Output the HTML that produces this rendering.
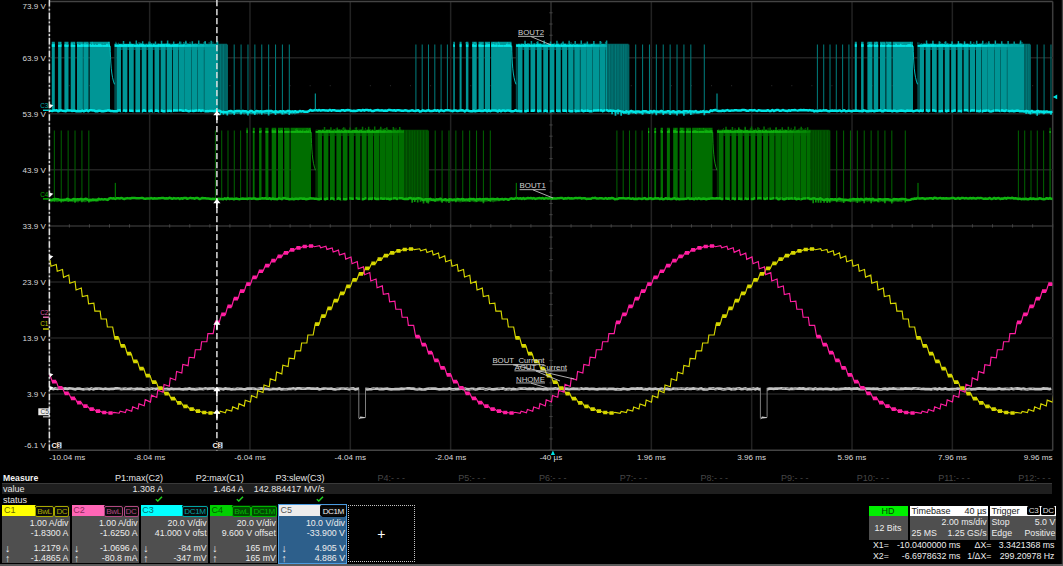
<!DOCTYPE html>
<html><head><meta charset="utf-8"><title>Oscilloscope</title>
<style>
html,body{margin:0;padding:0;background:#000;}
body{width:1063px;height:566px;position:relative;overflow:hidden;font-family:"Liberation Sans", sans-serif;font-size:9px;color:#e6e6e6;}
.m{position:absolute;white-space:nowrap;line-height:10px;}
.r{text-align:right;}
.dim{color:#474747;}
.ch{position:absolute;top:505.3px;width:67.4px;height:57.4px;}
.ch .hd{position:absolute;left:0;top:0;width:67.4px;height:10.8px;line-height:11px;}
.ch .nm{position:absolute;left:1.6px;top:0;font-size:9px;}
.ch .bgs{position:absolute;right:0;top:0;height:10.8px;display:flex;gap:0.6px;background:#0a0a0a;padding:0 0.4px;box-sizing:border-box;border-radius:1.5px 0 0 1.5px;}
.ch .bg{display:block;height:8.8px;margin-top:0.5px;line-height:9px;font-size:8.1px;padding:0 1.1px;border:0.65px solid currentColor;border-radius:2px;letter-spacing:-0.42px;}
.ch .ln{position:absolute;left:0;width:66px;text-align:right;line-height:10px;font-size:8.8px;color:#ededed;white-space:nowrap;}
.ch .ln i{position:absolute;left:2.5px;font-style:normal;font-size:10.5px;}
.box{position:absolute;background:#4f4f4f;}
.wh{position:absolute;background:#fff;color:#222;height:10.2px;line-height:10.4px;font-size:9px;}
.t{position:absolute;white-space:nowrap;line-height:10px;font-size:8.8px;color:#ededed;}
.bb{display:inline-block;background:#000;color:#fff;border-radius:1.5px;font-size:8px;line-height:9.6px;height:8.8px;padding:0 1.6px;vertical-align:top;margin-top:0.8px;color:#ddd;margin-left:1.2px;letter-spacing:-0.3px;}
</style></head><body>
<svg width="1063" height="566" viewBox="0 0 1063 566" style="position:absolute;left:0;top:0">
<rect width="1063" height="566" fill="#000"/>
<g stroke-width="1.5">
<line x1="49.3" y1="1.6" x2="49.3" y2="450.2" stroke="#3c3c3c"/>
<line x1="149.64" y1="1.6" x2="149.64" y2="450.2" stroke="#222"/>
<line x1="249.98" y1="1.6" x2="249.98" y2="450.2" stroke="#222"/>
<line x1="350.32" y1="1.6" x2="350.32" y2="450.2" stroke="#222"/>
<line x1="450.66" y1="1.6" x2="450.66" y2="450.2" stroke="#222"/>
<line x1="551" y1="1.6" x2="551" y2="450.2" stroke="#303030"/>
<line x1="651.34" y1="1.6" x2="651.34" y2="450.2" stroke="#222"/>
<line x1="751.68" y1="1.6" x2="751.68" y2="450.2" stroke="#222"/>
<line x1="852.02" y1="1.6" x2="852.02" y2="450.2" stroke="#222"/>
<line x1="952.36" y1="1.6" x2="952.36" y2="450.2" stroke="#222"/>
<line x1="1052.7" y1="1.6" x2="1052.7" y2="450.2" stroke="#3c3c3c"/>
<line x1="49.3" y1="1.6" x2="1052.7" y2="1.6" stroke="#444"/>
<line x1="49.3" y1="57.67" x2="1052.7" y2="57.67" stroke="#222"/>
<line x1="49.3" y1="113.75" x2="1052.7" y2="113.75" stroke="#222"/>
<line x1="49.3" y1="169.82" x2="1052.7" y2="169.82" stroke="#222"/>
<line x1="49.3" y1="225.9" x2="1052.7" y2="225.9" stroke="#303030"/>
<line x1="49.3" y1="281.98" x2="1052.7" y2="281.98" stroke="#222"/>
<line x1="49.3" y1="338.05" x2="1052.7" y2="338.05" stroke="#222"/>
<line x1="49.3" y1="394.12" x2="1052.7" y2="394.12" stroke="#222"/>
<line x1="49.3" y1="450.2" x2="1052.7" y2="450.2" stroke="#444"/>
</g>
<path d="M49.3 224.3V227.5M69.37 224.3V227.5M89.44 224.3V227.5M109.5 224.3V227.5M129.57 224.3V227.5M149.64 224.3V227.5M169.71 224.3V227.5M189.78 224.3V227.5M209.84 224.3V227.5M229.91 224.3V227.5M249.98 224.3V227.5M270.05 224.3V227.5M290.12 224.3V227.5M310.18 224.3V227.5M330.25 224.3V227.5M350.32 224.3V227.5M370.39 224.3V227.5M390.46 224.3V227.5M410.52 224.3V227.5M430.59 224.3V227.5M450.66 224.3V227.5M470.73 224.3V227.5M490.8 224.3V227.5M510.86 224.3V227.5M530.93 224.3V227.5M551 224.3V227.5M571.07 224.3V227.5M591.14 224.3V227.5M611.2 224.3V227.5M631.27 224.3V227.5M651.34 224.3V227.5M671.41 224.3V227.5M691.48 224.3V227.5M711.54 224.3V227.5M731.61 224.3V227.5M751.68 224.3V227.5M771.75 224.3V227.5M791.82 224.3V227.5M811.88 224.3V227.5M831.95 224.3V227.5M852.02 224.3V227.5M872.09 224.3V227.5M892.16 224.3V227.5M912.22 224.3V227.5M932.29 224.3V227.5M952.36 224.3V227.5M972.43 224.3V227.5M992.5 224.3V227.5M1012.56 224.3V227.5M1032.63 224.3V227.5M1052.7 224.3V227.5M549.4 1.6H552.6M549.4 12.81H552.6M549.4 24.03H552.6M549.4 35.24H552.6M549.4 46.46H552.6M549.4 57.68H552.6M549.4 68.89H552.6M549.4 80.1H552.6M549.4 91.32H552.6M549.4 102.53H552.6M549.4 113.75H552.6M549.4 124.96H552.6M549.4 136.18H552.6M549.4 147.39H552.6M549.4 158.61H552.6M549.4 169.82H552.6M549.4 181.04H552.6M549.4 192.25H552.6M549.4 203.47H552.6M549.4 214.68H552.6M549.4 225.9H552.6M549.4 237.11H552.6M549.4 248.33H552.6M549.4 259.55H552.6M549.4 270.76H552.6M549.4 281.98H552.6M549.4 293.19H552.6M549.4 304.4H552.6M549.4 315.62H552.6M549.4 326.84H552.6M549.4 338.05H552.6M549.4 349.26H552.6M549.4 360.48H552.6M549.4 371.69H552.6M549.4 382.91H552.6M549.4 394.12H552.6M549.4 405.34H552.6M549.4 416.55H552.6M549.4 427.77H552.6M549.4 438.98H552.6M549.4 450.2H552.6" stroke="#444" stroke-width="1" fill="none"/>
<path d="M68.87 85.71h1M88.94 85.71h1M109 85.71h1M129.07 85.71h1M169.21 85.71h1M189.28 85.71h1M209.34 85.71h1M229.41 85.71h1M269.55 85.71h1M289.62 85.71h1M309.68 85.71h1M329.75 85.71h1M369.89 85.71h1M389.96 85.71h1M410.02 85.71h1M430.09 85.71h1M470.23 85.71h1M490.3 85.71h1M510.36 85.71h1M530.43 85.71h1M570.57 85.71h1M590.64 85.71h1M610.7 85.71h1M630.77 85.71h1M670.91 85.71h1M690.98 85.71h1M711.04 85.71h1M731.11 85.71h1M771.25 85.71h1M791.32 85.71h1M811.38 85.71h1M831.45 85.71h1M871.59 85.71h1M891.66 85.71h1M911.72 85.71h1M931.79 85.71h1M971.93 85.71h1M992 85.71h1M1012.06 85.71h1M1032.13 85.71h1" stroke="#2c2c2c" stroke-width="1" fill="none"/>
<clipPath id="cp"><rect x="49" y="0" width="1003.5" height="451"/></clipPath>
<g clip-path="url(#cp)">
<polyline points="49.3 388.72 51.3 388.55 53.3 389.05 55.3 388.47 57.3 388.94 59.3 388.77 61.3 388.46 63.3 388.91 65.3 388.44 67.3 388.83 69.3 388.47 71.3 388.49 73.3 388.82 75.3 389.23 77.3 388.52 79.3 388.62 81.3 389.03 83.3 389.35 85.3 388.98 87.3 388.8 89.3 389.38 91.3 388.45 93.3 389.26 95.3 388.69 97.3 388.54 99.3 388.52 101.3 388.71 103.3 389.22 105.3 388.58 107.3 388.98 109.3 389.04 111.3 388.77 113.3 388.95 115.3 388.46 117.3 388.46 119.3 388.61 121.3 389.08 123.3 388.83 125.3 388.71 127.3 388.99 129.3 388.85 131.3 388.7 133.3 389.19 135.3 389.1 137.3 388.64 139.3 388.97 141.3 388.93 143.3 389.28 145.3 389.13 147.3 388.69 149.3 389.38 151.3 388.52 153.3 388.82 155.3 389.16 157.3 388.55 159.3 388.89 161.3 388.44 163.3 389.07 165.3 389.16 167.3 388.97 169.3 389.28 171.3 388.71 173.3 389.1 175.3 388.99 177.3 388.98 179.3 388.86 181.3 389.24 183.3 389.34 185.3 388.87 187.3 389.06 189.3 388.46 191.3 389.1 193.3 389.05 195.3 389.39 197.3 389.22 199.3 388.68 201.3 388.79 203.3 389.07 205.3 388.42 207.3 388.86 209.3 388.57 211.3 388.52 213.3 388.46 215.3 389.17 217.3 388.53 219.3 388.65 221.3 388.79 223.3 389.27 225.3 388.48 227.3 388.85 229.3 388.95 231.3 389.28 233.3 389.22 235.3 389.26 237.3 388.68 239.3 388.82 241.3 388.76 243.3 389.28 245.3 389.36 247.3 388.55 249.3 388.58 251.3 388.63 253.3 388.63 255.3 388.88 257.3 388.99 259.3 388.66 261.3 388.4 263.3 388.82 265.3 388.77 267.3 388.97 269.3 389.35 271.3 389.09 273.3 388.92 275.3 389.02 277.3 389.08 279.3 388.45 281.3 389.3 283.3 389.18 285.3 389.27 287.3 389.2 289.3 388.79 291.3 388.8 293.3 388.5 295.3 389.03 297.3 388.46 299.3 388.47 301.3 388.61 303.3 388.56 305.3 388.74 307.3 388.45 309.3 388.4 311.3 388.55 313.3 388.5 315.3 388.76 317.3 388.43 319.3 389.27 321.3 389.01 323.3 388.55 325.3 388.65 327.3 388.75 329.3 388.76 331.3 388.52 333.3 389.25 335.3 389.39 337.3 388.87 339.3 388.88 341.3 388.49 343.3 388.5 345.3 388.74 347.3 388.66 349.3 389.23 351.3 388.56 353.3 388.42 355.3 389.35 357.3 388.93 359.3 388.55 361.3 388.94 363.3 388.43 365.3 388.93 367.3 389.38 369.3 389.26 371.3 389.1 373.3 388.66 375.3 388.77 377.3 388.57 379.3 389.17 381.3 388.93 383.3 389.18 385.3 388.73 387.3 388.62 389.3 389.21 391.3 389.38 393.3 389.25 395.3 389.21 397.3 389.22 399.3 389.14 401.3 388.63 403.3 388.92 405.3 388.76 407.3 388.43 409.3 388.43 411.3 388.68 413.3 388.66 415.3 389.09 417.3 389.36 419.3 388.85 421.3 389.34 423.3 389.39 425.3 389.36 427.3 388.76 429.3 388.62 431.3 388.63 433.3 388.6 435.3 388.6 437.3 389.02 439.3 389.3 441.3 389.24 443.3 388.88 445.3 389.05 447.3 389.2 449.3 388.48 451.3 389.06 453.3 389.31 455.3 389.18 457.3 389.15 459.3 388.88 461.3 388.58 463.3 389.19 465.3 388.73 467.3 389.2 469.3 389.37 471.3 388.8 473.3 388.8 475.3 389.35 477.3 389.12 479.3 388.57 481.3 388.53 483.3 388.55 485.3 389.3 487.3 389.21 489.3 388.55 491.3 389.23 493.3 389.38 495.3 389.06 497.3 388.75 499.3 388.95 501.3 388.53 503.3 388.41 505.3 389.37 507.3 389.05 509.3 388.93 511.3 389.33 513.3 388.83 515.3 389.27 517.3 389.23 519.3 388.61 521.3 388.65 523.3 388.69 525.3 388.64 527.3 388.99 529.3 388.66 531.3 388.82 533.3 388.53 535.3 389.31 537.3 388.75 539.3 388.86 541.3 388.98 543.3 389.3 545.3 388.82 547.3 389.32 549.3 388.9 551.3 388.93 553.3 388.92 555.3 388.42 557.3 388.84 559.3 388.58 561.3 388.4 563.3 389.2 565.3 388.57 567.3 388.87 569.3 389.13 571.3 388.96 573.3 388.73 575.3 388.92 577.3 388.96 579.3 389.18 581.3 388.51 583.3 388.96 585.3 388.65 587.3 388.68 589.3 389.17 591.3 388.91 593.3 388.96 595.3 389.16 597.3 389.31 599.3 388.84 601.3 389.01 603.3 388.91 605.3 388.91 607.3 389.09 609.3 388.85 611.3 388.93 613.3 388.88 615.3 389.34 617.3 389.1 619.3 389.28 621.3 389.34 623.3 388.66 625.3 388.96 627.3 389.34 629.3 389.24 631.3 388.54 633.3 388.52 635.3 388.84 637.3 388.47 639.3 388.64 641.3 388.47 643.3 389.07 645.3 389.18 647.3 389.3 649.3 388.55 651.3 389.12 653.3 389.06 655.3 388.54 657.3 389.28 659.3 389.37 661.3 388.62 663.3 389.35 665.3 388.8 667.3 388.89 669.3 389.39 671.3 389.23 673.3 388.56 675.3 388.83 677.3 388.92 679.3 388.74 681.3 388.6 683.3 388.72 685.3 389.12 687.3 388.42 689.3 388.95 691.3 388.84 693.3 388.42 695.3 388.73 697.3 389.02 699.3 388.91 701.3 388.46 703.3 389.39 705.3 389.19 707.3 389.37 709.3 388.5 711.3 388.67 713.3 388.44 715.3 389.18 717.3 388.67 719.3 388.53 721.3 388.82 723.3 389.31 725.3 389.22 727.3 388.66 729.3 388.55 731.3 389.32 733.3 388.97 735.3 389.1 737.3 388.49 739.3 388.46 741.3 389.09 743.3 388.83 745.3 388.47 747.3 389.34 749.3 389.03 751.3 389.2 753.3 388.48 755.3 389.26 757.3 388.47 759.3 389.26 761.3 388.85 763.3 388.74 765.3 388.95 767.3 389.33 769.3 388.67 771.3 388.53 773.3 388.93 775.3 388.64 777.3 388.51 779.3 388.56 781.3 388.45 783.3 388.6 785.3 388.71 787.3 388.71 789.3 389.16 791.3 388.69 793.3 388.9 795.3 388.58 797.3 388.75 799.3 388.42 801.3 388.65 803.3 388.42 805.3 389.13 807.3 388.95 809.3 388.59 811.3 388.87 813.3 389.33 815.3 388.51 817.3 389.22 819.3 388.83 821.3 388.9 823.3 389.23 825.3 388.79 827.3 388.91 829.3 389.09 831.3 389.38 833.3 388.74 835.3 389.23 837.3 389.11 839.3 389.04 841.3 388.8 843.3 388.75 845.3 388.45 847.3 388.53 849.3 388.47 851.3 389.14 853.3 388.66 855.3 388.56 857.3 388.48 859.3 389.24 861.3 389.27 863.3 389.07 865.3 388.68 867.3 388.64 869.3 388.69 871.3 388.86 873.3 388.56 875.3 388.85 877.3 388.66 879.3 389.36 881.3 389.37 883.3 388.95 885.3 388.64 887.3 389.37 889.3 388.71 891.3 388.76 893.3 388.4 895.3 388.78 897.3 388.87 899.3 388.9 901.3 388.6 903.3 388.9 905.3 388.4 907.3 388.66 909.3 388.49 911.3 388.8 913.3 388.44 915.3 388.42 917.3 388.7 919.3 388.63 921.3 388.99 923.3 388.93 925.3 389.15 927.3 389.06 929.3 389.12 931.3 389.28 933.3 388.79 935.3 388.73 937.3 389.38 939.3 388.55 941.3 389.12 943.3 389.04 945.3 388.44 947.3 389.24 949.3 389.29 951.3 389.03 953.3 389.13 955.3 389.21 957.3 388.54 959.3 388.92 961.3 388.9 963.3 389.23 965.3 389.2 967.3 389.23 969.3 388.98 971.3 389.29 973.3 389.08 975.3 389.09 977.3 388.63 979.3 388.43 981.3 388.53 983.3 388.76 985.3 388.5 987.3 389.24 989.3 388.96 991.3 389.03 993.3 389.03 995.3 389.08 997.3 388.89 999.3 388.4 1001.3 389.2 1003.3 389.15 1005.3 388.9 1007.3 388.94 1009.3 389.06 1011.3 388.47 1013.3 389.14 1015.3 388.65 1017.3 388.47 1019.3 388.67 1021.3 389.13 1023.3 388.61 1025.3 389.14 1027.3 389.38 1029.3 388.89 1031.3 388.78 1033.3 388.88 1035.3 389.08 1037.3 389.17 1039.3 389.02 1041.3 389.04 1043.3 388.48 1045.3 388.55 1047.3 388.65 1049.3 389.14 1051.3 388.7" stroke="#c2c2c2" stroke-width="2.7" fill="none"/>
<path d="M55.35 388.48h3.18M84.16 388.83h3.55M91.03 388.48h2.02M97.81 389.05h1.85M117.29 389.62h2.72M120.39 388.89h2.63M124.59 388.62h2.29M130.95 389.35h3.6M144.45 388.71h4M149.8 388.77h2.19M153 389.5h2.21M159.74 388.48h2.78M163.5 389.72h3.71M195.18 388.09h3.82M203.06 389.33h3.94M215.88 388.29h2.02M233.37 388.25h1.98M236.73 388.16h2.1M251.97 388.94h2.44M256.32 388.5h3.92M269.21 388.45h2.5M283.47 389.28h3.74M291.36 389.67h3.56M301.78 388.28h2.81M324.66 389.41h2.08M335.56 388.45h3.09M341.35 388.13h2.81M346.68 388.4h3M349.72 388.83h3.9M360.2 388.44h3.9M366.02 388.04h2.75M371.72 388.46h3.17M378.42 388.06h2.35M404.84 389.37h2.24M415.4 388.75h3.16M422.19 388.71h2.03M429.09 388.09h1.65M451.51 389.68h3.37M459.15 388.6h1.92M462.16 388.63h3.89M469.48 389.48h3.56M474.21 388.85h2.43M480.89 388.66h3.74M484.01 389.46h3.42M487.18 388.11h3.8M497.8 388.49h3.89M503.27 389.29h2.29M507.37 389.36h3.79M516 388.86h3.89M522.82 388.45h2.57M547.88 388.65h3.46M551.19 389.36h2.12M554.45 388.99h2.31M568.33 388.15h1.74M578.11 388.75h3.05M606.14 388.44h1.88M616.98 389.79h2.77M642.86 388.53h1.8M661.24 389.4h3.86M670.14 388.66h1.85M673.96 389.08h3.13M677.77 388.59h3.2M681.51 388.37h3.49M686.71 388.18h2.49M695.27 389.25h2.52M699.4 389.72h2.28M704.67 388.75h3.66M711.66 388.35h3.32M715.47 389.62h2.56M721.75 389.59h2.65M725.4 388.99h3.1M732.04 389.12h2.43M737.06 388.51h2.8M743.76 388.88h3.51M750.63 388.23h3.86M778.31 389.52h3.57M782.04 388.72h2.79M786.57 388.44h3.31M793.16 389.01h3.39M809.21 389.05h2.56M814.85 388.79h1.56M837.53 388.78h1.73M879.42 389.77h2.73M896.63 388.63h3.39M914.62 388.47h2.77M918.89 388.33h1.9M932.22 389.41h1.79M953.53 389.79h3.07M967.48 389.38h2.61M990.98 388h1.58M1005.89 388.41h3.13M1008.98 388.64h1.77M1013.41 389.05h2.97M1022.13 389.69h2.11M1025.72 389.15h3.68M1031.85 388.48h1.53M1052.54 389.63h1.61" stroke="#7a7a7a" stroke-width="0.9" fill="none"/>
<rect x="359.1" y="385.9" width="6.2" height="6" fill="#000"/>
<path d="M358.8 388.9V418.4M365.5 416.9V387.9" stroke="#8c8c8c" stroke-width="0.9" fill="none"/>
<path d="M358.6 419.4L360.3 416.5L365.6 417.29999999999995L365.6 418.09999999999997L360.4 418.5Z" fill="#cfcfcf"/>
<rect x="760.7" y="385.9" width="6.2" height="6" fill="#000"/>
<path d="M760.4 388.9V418.4M767.1 416.9V387.9" stroke="#8c8c8c" stroke-width="0.9" fill="none"/>
<path d="M760.2 419.4L761.9 416.5L767.2 417.29999999999995L767.2 418.09999999999997L762 418.5Z" fill="#cfcfcf"/>
<path d="M246.5 127.8H247.7V198.4H246.5ZM252.8 127.8H254.6V198.4H252.8ZM259.1 127.8H261.5V198.4H259.1ZM265.4 127.8H268.4V198.4H265.4ZM271.7 127.8H276.2V198.4H271.7ZM278 127.8H283V198.4H278ZM284.3 127.8H289.6V198.4H284.3ZM290.6 127.8H296.95V198.4H290.6ZM296.9 127.8H303.25V198.4H296.9ZM303.2 127.8H309.55V198.4H303.2ZM309.5 127.8H311V198.4H309.5ZM648 127.8H649.2V198.4H648ZM654.3 127.8H656.1V198.4H654.3ZM660.6 127.8H663V198.4H660.6ZM666.9 127.8H669.9V198.4H666.9ZM673.2 127.8H677.7V198.4H673.2ZM679.5 127.8H684.5V198.4H679.5ZM685.8 127.8H691.1V198.4H685.8ZM692.1 127.8H698.45V198.4H692.1ZM698.4 127.8H704.75V198.4H698.4ZM704.7 127.8H711.05V198.4H704.7ZM711 127.8H712.5V198.4H711ZM1049.5 127.8H1050.7V198.4H1049.5Z" fill="#006e00"/>
<path d="M317.4 129.8H404V198.4H317.4ZM718.9 129.8H810.8V198.4H718.9Z" fill="#006e00"/>
<path d="M324.53 130.8V127.06M330.91 130.8V127.33M337.29 130.8V127.47M343.67 130.8V127.32M350.05 130.8V127.55M356.43 130.8V127.2M362.55 130.8V126.7M368.63 130.8V126.77M374.7 130.8V126.59M380.77 130.8V126.75M386.84 130.8V127.28M393.36 130.8V126.94M399.74 130.8V127.08M726.03 130.8V126.65M732.41 130.8V126.97M738.79 130.8V127.28M745.17 130.8V126.83M751.55 130.8V126.44M757.93 130.8V127.34M764.05 130.8V126.54M770.13 130.8V127.58M776.2 130.8V127.29M782.27 130.8V127.32M788.34 130.8V126.71M794.86 130.8V126.47M801.24 130.8V126.7M807.62 130.8V127.21" stroke="#006e00" stroke-width="1.5" fill="none"/>
<path d="M404 129.8H428V198.4H404ZM810.8 129.8H829.5V198.4H810.8Z" fill="#004a00"/>
<path d="M315.3 129.8H317.4V198.4H315.3ZM716.8 129.8H718.9V198.4H716.8Z" fill="#003400"/>
<path d="M54.36 130.6V198.4M61.25 130.6V198.4M68.14 130.6V198.4M75.03 130.6V198.4M81.92 130.6V198.4M88.81 130.6V198.4M215.4 130.6V198.4M221.7 130.6V198.4M228 130.6V198.4M234.3 130.6V198.4M240.6 130.6V198.4M406.4 130.6V198.4M409.74 130.6V198.4M412.19 130.6V198.4M414.71 130.6V198.4M417.68 130.6V198.4M420.54 130.6V198.4M423.54 130.6V198.4M426.74 130.6V198.4M428.3 130.6V198.4M435.19 130.6V198.4M442.08 130.6V198.4M448.97 130.6V198.4M455.86 130.6V198.4M462.75 130.6V198.4M469.64 130.6V198.4M476.53 130.6V198.4M483.42 130.6V198.4M490.31 130.6V198.4M616.9 130.6V198.4M623.2 130.6V198.4M629.5 130.6V198.4M635.8 130.6V198.4M642.1 130.6V198.4M813.2 130.6V198.4M815.84 130.6V198.4M818.47 130.6V198.4M820.82 130.6V198.4M824.1 130.6V198.4M827.26 130.6V198.4M829.8 130.6V198.4M836.69 130.6V198.4M843.58 130.6V198.4M850.47 130.6V198.4M857.36 130.6V198.4M864.25 130.6V198.4M871.14 130.6V198.4M878.03 130.6V198.4M884.92 130.6V198.4M891.81 130.6V198.4M905.3 130.6V198.4M1018.4 130.6V198.4M1024.7 130.6V198.4M1031 130.6V198.4M1037.3 130.6V198.4M1043.6 130.6V198.4" stroke="#006000" stroke-width="1.05" fill="none"/>
<path d="M246.5 131.9H247.7" stroke="#10b410" stroke-width="2" stroke-opacity="1" fill="none"/>
<path d="M246.5 130.29h1.2" stroke="#10b410" stroke-width="1.3" stroke-opacity="0.8" fill="none"/>
<path d="M252.8 131.9H254.6" stroke="#10b410" stroke-width="2" stroke-opacity="1" fill="none"/>
<path d="" stroke="#10b410" stroke-width="1.3" stroke-opacity="0.8" fill="none"/>
<path d="M259.1 131.9H261.5" stroke="#10b410" stroke-width="2" stroke-opacity="1" fill="none"/>
<path d="M260.87 130.77h0.63" stroke="#10b410" stroke-width="1.3" stroke-opacity="0.8" fill="none"/>
<path d="M265.4 131.9H268.4" stroke="#10b410" stroke-width="2" stroke-opacity="1" fill="none"/>
<path d="" stroke="#10b410" stroke-width="1.3" stroke-opacity="0.8" fill="none"/>
<path d="M271.7 131.9H276.2" stroke="#10b410" stroke-width="2" stroke-opacity="1" fill="none"/>
<path d="M271.7 130.27h1.6M273.3 130.83h1.67M274.97 130.19h1M275.97 130.21h0.23" stroke="#10b410" stroke-width="1.3" stroke-opacity="0.8" fill="none"/>
<path d="M278 131.9H283" stroke="#10b410" stroke-width="2" stroke-opacity="1" fill="none"/>
<path d="M278 130.65h0.84M280.53 130.57h1.83" stroke="#10b410" stroke-width="1.3" stroke-opacity="0.8" fill="none"/>
<path d="M284.3 131.9H289.6" stroke="#10b410" stroke-width="2" stroke-opacity="1" fill="none"/>
<path d="M289.22 130.19h0.38" stroke="#10b410" stroke-width="1.3" stroke-opacity="0.8" fill="none"/>
<path d="M290.6 131.9H296.95" stroke="#10b410" stroke-width="2" stroke-opacity="1" fill="none"/>
<path d="M295.34 130.18h1.2M296.54 130.36h0.41" stroke="#10b410" stroke-width="1.3" stroke-opacity="0.8" fill="none"/>
<path d="M296.9 131.9H303.25" stroke="#10b410" stroke-width="2" stroke-opacity="1" fill="none"/>
<path d="M296.9 130.31h1.39M299.49 130.87h1.32M302.31 130.43h0.94" stroke="#10b410" stroke-width="1.3" stroke-opacity="0.8" fill="none"/>
<path d="M303.2 131.9H309.55" stroke="#10b410" stroke-width="2" stroke-opacity="1" fill="none"/>
<path d="M305.9 130.79h1.55M308.38 130.26h1.04" stroke="#10b410" stroke-width="1.3" stroke-opacity="0.8" fill="none"/>
<path d="M309.5 131.9H311" stroke="#10b410" stroke-width="2" stroke-opacity="1" fill="none"/>
<path d="M309.5 130.49h0.81M310.31 130.5h0.69" stroke="#10b410" stroke-width="1.3" stroke-opacity="0.8" fill="none"/>
<path d="M315.6 131.9H322.01" stroke="#10b410" stroke-width="2" stroke-opacity="1" fill="none"/>
<path d="M318.05 130.66h1.2M319.25 130.61h1.5" stroke="#10b410" stroke-width="1.3" stroke-opacity="0.8" fill="none"/>
<path d="M321.98 131.9H328.39" stroke="#10b410" stroke-width="2" stroke-opacity="1" fill="none"/>
<path d="M321.98 130.42h1.68M325.93 130.31h0.84M326.77 130.4h1.62" stroke="#10b410" stroke-width="1.3" stroke-opacity="0.8" fill="none"/>
<path d="M328.36 131.9H334.77" stroke="#10b410" stroke-width="2" stroke-opacity="1" fill="none"/>
<path d="M328.36 130.47h2.04M333.8 130.22h0.97" stroke="#10b410" stroke-width="1.3" stroke-opacity="0.8" fill="none"/>
<path d="M334.74 131.9H341.15" stroke="#10b410" stroke-width="2" stroke-opacity="1" fill="none"/>
<path d="M336.72 130.45h1.84M338.56 130.2h1.88" stroke="#10b410" stroke-width="1.3" stroke-opacity="0.8" fill="none"/>
<path d="M341.12 131.9H347.53" stroke="#10b410" stroke-width="2" stroke-opacity="1" fill="none"/>
<path d="M341.12 130.34h1.13M344.04 130.3h1.02M345.05 130.23h1.26M346.31 130.88h1.22" stroke="#10b410" stroke-width="1.3" stroke-opacity="0.8" fill="none"/>
<path d="M347.5 131.9H353.91" stroke="#10b410" stroke-width="2" stroke-opacity="1" fill="none"/>
<path d="M347.5 130.87h1.82M349.32 130.89h0.94M352.18 130.61h1.41M353.58 130.41h0.33" stroke="#10b410" stroke-width="1.3" stroke-opacity="0.8" fill="none"/>
<path d="M353.88 131.9H360.29" stroke="#10b410" stroke-width="2" stroke-opacity="1" fill="none"/>
<path d="M353.88 130.73h0.85M354.73 130.61h1.77M356.5 130.58h1.45M359.31 130.56h0.98" stroke="#10b410" stroke-width="1.3" stroke-opacity="0.8" fill="none"/>
<path d="M360.26 131.9H366.67" stroke="#10b410" stroke-width="2" stroke-opacity="1" fill="none"/>
<path d="M360.26 130.28h1.85" stroke="#10b410" stroke-width="1.3" stroke-opacity="0.8" fill="none"/>
<path d="M366.64 131.9H373.05" stroke="#10b410" stroke-width="2" stroke-opacity="1" fill="none"/>
<path d="M366.64 130.35h1.7M368.34 130.44h1.68M371.91 130.44h1.14" stroke="#10b410" stroke-width="1.3" stroke-opacity="0.8" fill="none"/>
<path d="M373.02 131.9H379.43" stroke="#10b410" stroke-width="2" stroke-opacity="0.96" fill="none"/>
<path d="M375.83 130.62h2.1M377.93 130.49h1.5" stroke="#10b410" stroke-width="1.3" stroke-opacity="0.76" fill="none"/>
<path d="M379.4 131.9H385.81" stroke="#10b410" stroke-width="2" stroke-opacity="0.81" fill="none"/>
<path d="M379.4 130.53h2.16M382.59 130.18h2.12M384.71 130.67h1.1" stroke="#10b410" stroke-width="1.3" stroke-opacity="0.65" fill="none"/>
<path d="M385.78 131.9H392.19" stroke="#10b410" stroke-width="2" stroke-opacity="0.67" fill="none"/>
<path d="M387.3 130.43h1.96M389.26 130.65h2.13" stroke="#10b410" stroke-width="1.3" stroke-opacity="0.54" fill="none"/>
<path d="M392.16 131.9H398.57" stroke="#10b410" stroke-width="2" stroke-opacity="0.53" fill="none"/>
<path d="M393.13 130.32h1.3M394.43 130.43h1.36M397.18 130.28h1.29" stroke="#10b410" stroke-width="1.3" stroke-opacity="0.42" fill="none"/>
<path d="M398.54 131.9H404" stroke="#10b410" stroke-width="2" stroke-opacity="0.39" fill="none"/>
<path d="M398.54 130.74h1.54M400.08 130.2h1.35M403.31 130.55h0.69" stroke="#10b410" stroke-width="1.3" stroke-opacity="0.31" fill="none"/>
<path d="M648 131.9H649.2" stroke="#10b410" stroke-width="2" stroke-opacity="1" fill="none"/>
<path d="" stroke="#10b410" stroke-width="1.3" stroke-opacity="0.8" fill="none"/>
<path d="M654.3 131.9H656.1" stroke="#10b410" stroke-width="2" stroke-opacity="1" fill="none"/>
<path d="" stroke="#10b410" stroke-width="1.3" stroke-opacity="0.8" fill="none"/>
<path d="M660.6 131.9H663" stroke="#10b410" stroke-width="2" stroke-opacity="1" fill="none"/>
<path d="M660.6 130.54h1.46" stroke="#10b410" stroke-width="1.3" stroke-opacity="0.8" fill="none"/>
<path d="M666.9 131.9H669.9" stroke="#10b410" stroke-width="2" stroke-opacity="1" fill="none"/>
<path d="M668.2 130.3h1.17M669.37 130.1h0.53" stroke="#10b410" stroke-width="1.3" stroke-opacity="0.8" fill="none"/>
<path d="M673.2 131.9H677.7" stroke="#10b410" stroke-width="2" stroke-opacity="1" fill="none"/>
<path d="M673.2 130.3h1.81M675.01 130.44h1.22" stroke="#10b410" stroke-width="1.3" stroke-opacity="0.8" fill="none"/>
<path d="M679.5 131.9H684.5" stroke="#10b410" stroke-width="2" stroke-opacity="1" fill="none"/>
<path d="M680.81 130.76h2" stroke="#10b410" stroke-width="1.3" stroke-opacity="0.8" fill="none"/>
<path d="M685.8 131.9H691.1" stroke="#10b410" stroke-width="2" stroke-opacity="1" fill="none"/>
<path d="M686.8 130.11h1.69M690.62 130.21h0.48" stroke="#10b410" stroke-width="1.3" stroke-opacity="0.8" fill="none"/>
<path d="M692.1 131.9H698.45" stroke="#10b410" stroke-width="2" stroke-opacity="1" fill="none"/>
<path d="M693.23 130.82h1.29M694.51 130.81h1.91" stroke="#10b410" stroke-width="1.3" stroke-opacity="0.8" fill="none"/>
<path d="M698.4 131.9H704.75" stroke="#10b410" stroke-width="2" stroke-opacity="1" fill="none"/>
<path d="M704.34 130.29h0.41" stroke="#10b410" stroke-width="1.3" stroke-opacity="0.8" fill="none"/>
<path d="M704.7 131.9H711.05" stroke="#10b410" stroke-width="2" stroke-opacity="1" fill="none"/>
<path d="M704.7 130.15h1M705.7 130.49h1.45M707.15 130.79h1.5M709.46 130.63h1.46M710.91 130.44h0.14" stroke="#10b410" stroke-width="1.3" stroke-opacity="0.8" fill="none"/>
<path d="M711 131.9H712.5" stroke="#10b410" stroke-width="2" stroke-opacity="1" fill="none"/>
<path d="M711 130.61h1.5" stroke="#10b410" stroke-width="1.3" stroke-opacity="0.8" fill="none"/>
<path d="M717.1 131.9H723.51" stroke="#10b410" stroke-width="2" stroke-opacity="1" fill="none"/>
<path d="M717.1 130.59h1.69M721.81 130.82h1.51" stroke="#10b410" stroke-width="1.3" stroke-opacity="0.8" fill="none"/>
<path d="M723.48 131.9H729.89" stroke="#10b410" stroke-width="2" stroke-opacity="1" fill="none"/>
<path d="M723.48 130.79h1.68M725.16 130.52h1.31M726.47 130.45h1.88M728.35 130.76h1.39" stroke="#10b410" stroke-width="1.3" stroke-opacity="0.8" fill="none"/>
<path d="M729.86 131.9H736.27" stroke="#10b410" stroke-width="2" stroke-opacity="1" fill="none"/>
<path d="M729.86 130.32h1.37M734.45 130.34h1.26" stroke="#10b410" stroke-width="1.3" stroke-opacity="0.8" fill="none"/>
<path d="M736.24 131.9H742.65" stroke="#10b410" stroke-width="2" stroke-opacity="1" fill="none"/>
<path d="M736.24 130.68h1.9M738.14 130.14h2.04M740.18 130.25h1.22M741.4 130.63h1.25" stroke="#10b410" stroke-width="1.3" stroke-opacity="0.8" fill="none"/>
<path d="M742.62 131.9H749.03" stroke="#10b410" stroke-width="2" stroke-opacity="1" fill="none"/>
<path d="M744.52 130.6h1.66M746.18 130.64h1.77" stroke="#10b410" stroke-width="1.3" stroke-opacity="0.8" fill="none"/>
<path d="M749 131.9H755.41" stroke="#10b410" stroke-width="2" stroke-opacity="1" fill="none"/>
<path d="M750.44 130.13h0.94M753.27 130.76h1.72M754.99 130.31h0.42" stroke="#10b410" stroke-width="1.3" stroke-opacity="0.8" fill="none"/>
<path d="M755.38 131.9H761.79" stroke="#10b410" stroke-width="2" stroke-opacity="1" fill="none"/>
<path d="M755.38 130.35h1.22M758.01 130.55h2.11M760.11 130.75h0.86" stroke="#10b410" stroke-width="1.3" stroke-opacity="0.8" fill="none"/>
<path d="M761.76 131.9H768.17" stroke="#10b410" stroke-width="2" stroke-opacity="1" fill="none"/>
<path d="M761.76 130.41h1.43M764.81 130.43h2.17M767.93 130.11h0.24" stroke="#10b410" stroke-width="1.3" stroke-opacity="0.8" fill="none"/>
<path d="M768.14 131.9H774.55" stroke="#10b410" stroke-width="2" stroke-opacity="1" fill="none"/>
<path d="M770.84 130.68h0.98M772.96 130.72h1.06" stroke="#10b410" stroke-width="1.3" stroke-opacity="0.8" fill="none"/>
<path d="M774.52 131.9H780.93" stroke="#10b410" stroke-width="2" stroke-opacity="0.96" fill="none"/>
<path d="M774.52 130.6h1.82M776.34 130.85h1.79M779.29 130.11h1.64" stroke="#10b410" stroke-width="1.3" stroke-opacity="0.76" fill="none"/>
<path d="M780.9 131.9H787.31" stroke="#10b410" stroke-width="2" stroke-opacity="0.81" fill="none"/>
<path d="M782.61 130.68h0.91M784.55 130.39h1.48M786.04 130.64h1.27" stroke="#10b410" stroke-width="1.3" stroke-opacity="0.65" fill="none"/>
<path d="M787.28 131.9H793.69" stroke="#10b410" stroke-width="2" stroke-opacity="0.67" fill="none"/>
<path d="M789.59 130.41h1.68M793.17 130.33h0.52" stroke="#10b410" stroke-width="1.3" stroke-opacity="0.54" fill="none"/>
<path d="M793.66 131.9H800.07" stroke="#10b410" stroke-width="2" stroke-opacity="0.53" fill="none"/>
<path d="M796.33 130.88h1.26M797.59 130.35h1.96" stroke="#10b410" stroke-width="1.3" stroke-opacity="0.42" fill="none"/>
<path d="M800.04 131.9H806.45" stroke="#10b410" stroke-width="2" stroke-opacity="0.39" fill="none"/>
<path d="M803.01 130.1h1.93M804.94 130.57h1.17" stroke="#10b410" stroke-width="1.3" stroke-opacity="0.31" fill="none"/>
<path d="M806.42 131.9H810.8" stroke="#10b410" stroke-width="2" stroke-opacity="0.25" fill="none"/>
<path d="M809.22 130.78h1.58" stroke="#10b410" stroke-width="1.3" stroke-opacity="0.2" fill="none"/>
<path d="M1049.5 131.9H1050.7" stroke="#10b410" stroke-width="2" stroke-opacity="1" fill="none"/>
<path d="" stroke="#10b410" stroke-width="1.3" stroke-opacity="0.8" fill="none"/>
<path d="M254.1 129.6v-1.29M284.3 129.6v-1.69M295.8 129.6v-0.71M296.9 129.6v-1.52M303.2 129.6v-0.47M307.1 129.6v-1.41M309.5 129.6v-1.36M316.9 129.6v-0.45M333.56 129.6v-0.72M334.74 129.6v-0.53M336.04 129.6v-1.29M342.42 129.6v-1.36M345.02 129.6v-1.93M355.18 129.6v-1.95M359.08 129.6v-0.81M365.46 129.6v-1.66M370.54 129.6v-0.63M379.4 129.6v-0.92M382 129.6v-1.17M383.3 129.6v-0.78M384.6 129.6v-1.48M385.78 129.6v-1.55M387.08 129.6v-0.46M394.76 129.6v-1.12M396.06 129.6v-1.89M654.3 129.6v-0.75M655.6 129.6v-1.54M661.9 129.6v-1.79M669.5 129.6v-0.83M675.8 129.6v-1.19M680.8 129.6v-1.97M682.1 129.6v-1.83M697.3 129.6v-0.86M699.7 129.6v-1.56M703.6 129.6v-1.69M706 129.6v-0.4M709.9 129.6v-1.1M718.4 129.6v-0.69M722.3 129.6v-0.53M723.48 129.6v-1.37M735.06 129.6v-1.57M738.84 129.6v-1.7M745.22 129.6v-1.86M750.3 129.6v-1.73M752.9 129.6v-0.99M755.38 129.6v-1.23M759.28 129.6v-1.54M768.14 129.6v-1.8M775.82 129.6v-1.95M778.42 129.6v-0.56M782.2 129.6v-0.55M784.8 129.6v-0.43M791.18 129.6v-1.79M793.66 129.6v-0.6M798.86 129.6v-1.05M800.04 129.6v-1.35M802.64 129.6v-1.32M805.24 129.6v-1.72" stroke="#10b410" stroke-width="0.8" stroke-opacity="0.6" fill="none"/>
<path d="M311.2 131.8 C311.5 147.8 312.3 162.8 315.5 170.3" stroke="#10b410" stroke-opacity="0.8" stroke-width="1" fill="none"/>
<path d="M712.7 131.8 C713 147.8 713.8 162.8 717 170.3" stroke="#10b410" stroke-opacity="0.8" stroke-width="1" fill="none"/>
<polyline points="49.3 200.16 50.6 201.3 51.9 200.95 53.2 200.36 54.5 200.27 55.8 200.63 57.1 201.17 58.4 200.81 59.7 200.16 61 200.03 62.3 200.15 63.6 201.12 64.9 200.26 66.2 200.78 67.5 200.41 68.8 200.96 70.1 200.53 71.4 200.2 72.7 201.23 74 200.75 75.3 200.97 76.6 201.13 77.9 201.33 79.2 200.02 80.5 200.48 81.8 200.21 83.1 200.7 84.4 201.22 85.7 201.12 87 200.05 88.3 200.26 89.6 201.15 90.9 200.95 92.2 200.55 93.5 200.67 94.8 200.22 96.1 201.18 97.4 200.55 98.7 201.22" stroke="#10b410" stroke-opacity="0.5" stroke-width="2" fill="none"/>
<polyline points="423 200.86 424.3 200.11 425.6 200.46 426.9 200.3 428.2 201.25 429.5 200.82 430.8 200.06 432.1 200.24 433.4 200.51 434.7 200.65 436 200.81 437.3 200.54 438.6 200.5 439.9 200.01 441.2 200.81 442.5 200.47 443.8 200.03 445.1 200.64 446.4 201.38 447.7 200.06 449 200.2 450.3 200.94 451.6 200.38 452.9 200.38 454.2 200.7 455.5 200.37 456.8 200.8 458.1 200.74 459.4 201.34 460.7 201.39 462 200.05 463.3 200.78 464.6 201.08 465.9 201.22 467.2 201.08 468.5 200.89 469.8 200.89 471.1 200.51 472.4 200.39 473.7 201.11 475 201.22 476.3 201.31 477.6 200.95 478.9 200.43 480.2 201.07 481.5 201.04 482.8 200.71 484.1 200.89 485.4 200.49 486.7 200.77 488 200.57 489.3 200.08 490.6 200.47 491.9 200.45 493.2 201.38 494.5 200.67 495.8 200.51 497.1 200.34 498.4 200.33 499.7 200.49" stroke="#10b410" stroke-opacity="0.5" stroke-width="2" fill="none"/>
<polyline points="824.5 200.19 825.8 200.01 827.1 201.22 828.4 200.63 829.7 200.62 831 200.8 832.3 200.42 833.6 200.24 834.9 200.09 836.2 200.42 837.5 200.43 838.8 201.02 840.1 200.77 841.4 201.31 842.7 200.48 844 201.29 845.3 200.82 846.6 200.11 847.9 200.25 849.2 200.81 850.5 201.38 851.8 200.5 853.1 201.08 854.4 200.6 855.7 201.22 857 200.09 858.3 200.68 859.6 201.26 860.9 200.39 862.2 200.36 863.5 200.03 864.8 200.23 866.1 200.38 867.4 200.99 868.7 200.31 870 200.56 871.3 200.28 872.6 200.84 873.9 201.21 875.2 200.91 876.5 200.28 877.8 201.03 879.1 201.35 880.4 200.84 881.7 200.11 883 201.13 884.3 201.23 885.6 200.48 886.9 200.19 888.2 200.26 889.5 200.75 890.8 201.23 892.1 200.9 893.4 201.29 894.7 200.3 896 200.46 897.3 201.05 898.6 200.91 899.9 200.57 901.2 200.95 902.5 200.47" stroke="#10b410" stroke-opacity="0.5" stroke-width="2" fill="none"/>
<path d="M54.36 199.4v2.31M61.25 199.4v3.03M68.14 199.4v2.29M75.03 199.4v3.45M81.92 199.4v2.87M88.81 199.4v3.19M412.19 199.4v3.4M414.71 199.4v2.71M417.68 199.4v3.13M420.54 199.4v2.23M423.54 199.4v4.05M426.74 199.4v3.33M428.3 199.4v4.18M435.19 199.4v2.31M442.08 199.4v3.43M448.97 199.4v3.65M455.86 199.4v2.86M462.75 199.4v2.39M469.64 199.4v2.51M476.53 199.4v2.49M483.42 199.4v3.73M490.31 199.4v2.38M813.2 199.4v3.83M815.84 199.4v3.05M818.47 199.4v3.28M820.82 199.4v3.38M824.1 199.4v3.31M827.26 199.4v3.51M829.8 199.4v3.4M836.69 199.4v2.86M843.58 199.4v3.68M850.47 199.4v2.72M857.36 199.4v3.62M864.25 199.4v3.73M871.14 199.4v3.75M878.03 199.4v2.82M884.92 199.4v3.75M891.81 199.4v4.15M905.3 199.4v3.11" stroke="#10b410" stroke-width="1.7" stroke-opacity="0.8" fill="none"/>
<polyline points="49.3 199.27 50.8 199.93 52.3 199.73 53.8 199.21 55.3 199.09 56.8 199.2 58.3 199.32 59.8 199.98 61.3 199.77 62.8 199.9 64.3 199.78 65.8 199.82 67.3 198.86 68.8 199.42 70.3 199.95 71.8 199.92 73.3 199.1 74.8 199.31 76.3 199.56 77.8 199.24 79.3 199.44 80.8 198.88 82.3 199.32 83.8 199.41 85.3 198.82 86.8 198.97 88.3 199.96 89.8 199.73 91.3 199.92 92.8 199.56 94.3 199.77 95.8 199.86 97.3 199.86 98.8 198.84 100.3 199.57 101.8 199.12 103.3 199.61 104.8 199.13 106.3 199.45 107.8 199.91 109.3 198.55 110.8 198.1 112.3 198.42 113.8 198.32 115.3 198.94 116.8 198.15 118.3 198.17 119.8 198.58 121.3 197.94 122.8 198.51 124.3 198.95 125.8 198.42 127.3 198.12 128.8 198.36 130.3 198.44 131.8 197.98 133.3 197.95 134.8 197.96 136.3 198.15 137.8 198.29 139.3 198.15 140.8 198.09 142.3 197.91 143.8 198.46 145.3 198.81 146.8 198.53 148.3 198.48 149.8 198.58 151.3 198.04 152.8 198.65 154.3 198.35 155.8 198.46 157.3 198.54 158.8 198.36 160.3 198.17 161.8 198.09 163.3 198.07 164.8 198.41 166.3 198.26 167.8 198.5 169.3 197.81 170.8 198.22 172.3 198.83 173.8 198.09 175.3 198.47 176.8 198.39 178.3 198.14 179.8 198.99 181.3 198.15 182.8 198.73 184.3 197.99 185.8 197.88 187.3 198.85 188.8 198.33 190.3 197.87 191.8 198.27 193.3 198.33 194.8 198.68 196.3 197.93 197.8 198.07 199.3 198.95 200.8 198.69 202.3 197.99 203.8 198.2 205.3 198.22 206.8 198.61 208.3 198.54 209.8 198.82 211.3 199.09 212.8 198.72 214.3 198.99 215.8 198.99 217.3 199.01 218.8 198.67 220.3 199.04 221.8 198.95 223.3 199.2 224.8 198.25 226.3 199.14 227.8 198.11 229.3 199.02 230.8 198.8 232.3 198.7 233.8 199.26 235.3 198.79 236.8 198.6 238.3 199.04 239.8 199.15 241.3 198.83 242.8 198.56 244.3 198.64 245.8 198.65 247.3 198.97 248.8 198.45 250.3 198.57 251.8 198.77 253.3 198.56 254.8 198.49 256.3 199.04 257.8 199.12 259.3 198.7 260.8 198.63 262.3 198.32 263.8 198.46 265.3 198.27 266.8 198.79 268.3 198.8 269.8 198.21 271.3 199.2 272.8 198.49 274.3 199.11 275.8 199.11 277.3 199.25 278.8 198.35 280.3 198.61 281.8 199.19 283.3 198.11 284.8 198.16 286.3 198.78 287.8 198.7 289.3 199.2 290.8 199.03 292.3 198.75 293.8 199.3 295.3 198.72 296.8 198.72 298.3 198.92 299.8 198.57 301.3 198.53 302.8 198.81 304.3 198.52 305.8 199.24 307.3 198.91 308.8 198.73 310.3 198.22 311.8 198.55 313.3 198.58 314.8 198.77 316.3 198.79 317.8 199.16 319.3 199.26 320.8 198.68 322.3 198.63 323.8 198.85 325.3 199.3 326.8 198.51 328.3 198.74 329.8 199.08 331.3 198.3 332.8 198.48 334.3 199.27 335.8 199.09 337.3 198.72 338.8 198.23 340.3 199.17 341.8 198.93 343.3 199.08 344.8 199.29 346.3 199.17 347.8 198.61 349.3 198.29 350.8 198.45 352.3 198.71 353.8 198.71 355.3 198.33 356.8 198.32 358.3 198.86 359.8 198.82 361.3 198.52 362.8 199.29 364.3 198.86 365.8 198.15 367.3 198.59 368.8 199.05 370.3 198.47 371.8 198.93 373.3 198.1 374.8 198.47 376.3 199.11 377.8 198.8 379.3 198.9 380.8 198.34 382.3 198.7 383.8 198.76 385.3 198.42 386.8 198.88 388.3 198.74 389.8 199.3 391.3 198.79 392.8 198.59 394.3 198.25 395.8 198.29 397.3 199.01 398.8 198.23 400.3 198.22 401.8 198.3 403.3 198.73 404.8 199.09 406.3 198.84 407.8 199.07 409.3 198.17 410.8 198.11 412.3 199.02 413.8 198.49 415.3 198.96 416.8 198.52 418.3 198.3 419.8 198.42 421.3 198.92 422.8 199.88 424.3 199.5 425.8 199.22 427.3 199.34 428.8 199.26 430.3 198.87 431.8 199.87 433.3 199.5 434.8 199.95 436.3 199.33 437.8 199.54 439.3 199.1 440.8 198.85 442.3 199.92 443.8 199.83 445.3 199.18 446.8 199.88 448.3 199.78 449.8 199.16 451.3 199.52 452.8 199.95 454.3 199.39 455.8 199.94 457.3 199.09 458.8 199.27 460.3 199.66 461.8 199.07 463.3 199.17 464.8 199.85 466.3 199.38 467.8 199.75 469.3 199.09 470.8 199.01 472.3 199.23 473.8 199.02 475.3 199.97 476.8 199.15 478.3 199.47 479.8 198.94 481.3 199.44 482.8 199.26 484.3 199.28 485.8 198.88 487.3 198.95 488.8 199.79 490.3 199.22 491.8 199.09 493.3 199.03 494.8 199.14 496.3 199.08 497.8 198.84 499.3 199.6 500.8 199.21 502.3 198.99 503.8 199.65 505.3 198.91 506.8 199.12 508.3 199.8 509.8 198.95 511.3 198.33 512.8 198.8 514.3 198.77 515.8 197.99 517.3 198.22 518.8 198.67 520.3 198.25 521.8 198.95 523.3 198.05 524.8 198.94 526.3 198.41 527.8 198.07 529.3 198.34 530.8 197.96 532.3 198.65 533.8 198.11 535.3 198.88 536.8 198.51 538.3 198.24 539.8 198.1 541.3 198.53 542.8 198.06 544.3 198.85 545.8 197.95 547.3 198.42 548.8 198.45 550.3 198.12 551.8 198.73 553.3 198.26 554.8 198.59 556.3 198.48 557.8 198.17 559.3 198.27 560.8 197.9 562.3 198.01 563.8 198.82 565.3 198.19 566.8 198.6 568.3 197.93 569.8 198.47 571.3 198.23 572.8 198.4 574.3 198.16 575.8 197.88 577.3 198.17 578.8 198.07 580.3 197.95 581.8 198.66 583.3 198.14 584.8 198.28 586.3 198.89 587.8 198.73 589.3 198.86 590.8 198.83 592.3 197.96 593.8 198.13 595.3 197.84 596.8 198.62 598.3 198.6 599.8 198.22 601.3 198.3 602.8 198.59 604.3 198.64 605.8 198.1 607.3 198.82 608.8 198.22 610.3 198.55 611.8 198.02 613.3 198.24 614.8 199.2 616.3 198.98 617.8 198.96 619.3 198.15 620.8 198.15 622.3 198.29 623.8 198.34 625.3 198.46 626.8 198.56 628.3 198.15 629.8 198.47 631.3 198.87 632.8 198.32 634.3 199.11 635.8 198.78 637.3 198.96 638.8 198.41 640.3 198.62 641.8 198.92 643.3 198.52 644.8 198.1 646.3 199.1 647.8 199.03 649.3 198.44 650.8 198.15 652.3 199.12 653.8 198.83 655.3 198.16 656.8 198.39 658.3 198.23 659.8 199.05 661.3 198.35 662.8 199.2 664.3 199 665.8 198.2 667.3 198.93 668.8 198.57 670.3 199 671.8 199.09 673.3 198.44 674.8 198.21 676.3 199.24 677.8 198.61 679.3 199.22 680.8 198.93 682.3 198.99 683.8 199.1 685.3 198.85 686.8 198.64 688.3 198.17 689.8 198.94 691.3 198.61 692.8 198.71 694.3 199.21 695.8 198.25 697.3 199.01 698.8 198.15 700.3 198.94 701.8 199.07 703.3 198.41 704.8 198.76 706.3 199.26 707.8 198.87 709.3 198.75 710.8 198.4 712.3 198.17 713.8 198.53 715.3 198.59 716.8 198.34 718.3 198.47 719.8 198.26 721.3 198.95 722.8 198.9 724.3 198.39 725.8 198.39 727.3 198.72 728.8 198.63 730.3 199.22 731.8 198.52 733.3 198.46 734.8 199.16 736.3 198.27 737.8 198.78 739.3 198.5 740.8 199.08 742.3 198.76 743.8 199.01 745.3 198.3 746.8 198.9 748.3 198.82 749.8 198.65 751.3 199.02 752.8 199.1 754.3 198.24 755.8 198.45 757.3 198.53 758.8 198.35 760.3 198.17 761.8 198.44 763.3 198.34 764.8 198.94 766.3 198.64 767.8 198.24 769.3 198.49 770.8 198.66 772.3 198.54 773.8 198.3 775.3 198.19 776.8 198.11 778.3 199.29 779.8 199 781.3 198.2 782.8 198.96 784.3 199.28 785.8 198.78 787.3 198.23 788.8 198.69 790.3 198.62 791.8 198.33 793.3 198.75 794.8 198.11 796.3 199.2 797.8 198.87 799.3 198.85 800.8 199.22 802.3 198.88 803.8 198.4 805.3 198.4 806.8 198.27 808.3 198.13 809.8 199.03 811.3 199.11 812.8 198.46 814.3 198.32 815.8 198.87 817.3 199.11 818.8 199.21 820.3 198.3 821.8 199.04 823.3 199.8 824.8 199.69 826.3 199.19 827.8 199.02 829.3 199.79 830.8 199.18 832.3 199.24 833.8 199.46 835.3 199.24 836.8 199.8 838.3 199.09 839.8 198.85 841.3 199.48 842.8 199.55 844.3 199.78 845.8 199.65 847.3 199.89 848.8 199.93 850.3 199.39 851.8 199.4 853.3 198.99 854.8 199.16 856.3 199.5 857.8 198.9 859.3 199.63 860.8 199 862.3 199.33 863.8 199.96 865.3 198.91 866.8 198.85 868.3 199.33 869.8 199.03 871.3 199.67 872.8 198.8 874.3 199.81 875.8 199.83 877.3 199.74 878.8 199.31 880.3 199.14 881.8 199.59 883.3 199.42 884.8 199.31 886.3 199.21 887.8 199.33 889.3 199.6 890.8 199.79 892.3 199.88 893.8 199 895.3 199.15 896.8 199.33 898.3 199.48 899.8 199.22 901.3 199.03 902.8 198.9 904.3 199.19 905.8 199.35 907.3 199.97 908.8 199.89 910.3 199.84 911.8 198.97 913.3 198.95 914.8 198.54 916.3 198.77 917.8 197.87 919.3 198.61 920.8 198.53 922.3 198.16 923.8 198.49 925.3 198.94 926.8 198.38 928.3 198.58 929.8 198.16 931.3 198.21 932.8 198.86 934.3 197.83 935.8 198.03 937.3 198.61 938.8 198.34 940.3 197.9 941.8 198.59 943.3 198.25 944.8 198.5 946.3 198.3 947.8 198.44 949.3 198.48 950.8 198.28 952.3 197.94 953.8 198.02 955.3 198.87 956.8 198.46 958.3 197.93 959.8 198.83 961.3 198.1 962.8 197.91 964.3 198.44 965.8 198.1 967.3 198.39 968.8 198.46 970.3 198.07 971.8 198.49 973.3 197.94 974.8 198.42 976.3 198.51 977.8 197.9 979.3 198.29 980.8 197.89 982.3 198.33 983.8 198.84 985.3 198.46 986.8 198.66 988.3 198.71 989.8 197.94 991.3 198.99 992.8 198.67 994.3 197.92 995.8 198.8 997.3 198.27 998.8 198.01 1000.3 198.95 1001.8 198.48 1003.3 198.73 1004.8 197.96 1006.3 198.73 1007.8 197.87 1009.3 198.08 1010.8 198.25 1012.3 197.82 1013.8 198.51 1015.3 198.36 1016.8 198.46 1018.3 198.95 1019.8 198.61 1021.3 199.17 1022.8 198.85 1024.3 199.15 1025.8 198.78 1027.3 199.2 1028.8 199.14 1030.3 198.3 1031.8 198.99 1033.3 198.51 1034.8 199.02 1036.3 198.92 1037.8 199.09 1039.3 198.25 1040.8 198.55 1042.3 198.98 1043.8 199.24 1045.3 198.97 1046.8 198.15 1048.3 198.82 1049.8 198.22 1051.3 198.76 1052.8 199.06" stroke="#10b410" stroke-width="2.5" fill="none" stroke-linejoin="round"/>
<path d="M321.98 135.8H323.63V200.6H321.98ZM328.36 135.8H330.01V200.6H328.36ZM334.74 135.8H336.39V200.6H334.74ZM341.12 135.8H342.77V200.6H341.12ZM347.5 135.8H349.15V200.6H347.5ZM353.88 135.8H355.53V200.6H353.88ZM360.26 135.8H361.65V200.6H360.26ZM366.64 135.8H367.73V200.6H366.64ZM373.02 135.8H373.8V200.6H373.02ZM379.4 135.8H379.87V200.6H379.4ZM385.78 135.8H385.94V200.6H385.78ZM392.16 135.8H392.46V200.6H392.16ZM398.54 135.8H398.84V200.6H398.54ZM723.48 135.8H725.13V200.6H723.48ZM729.86 135.8H731.51V200.6H729.86ZM736.24 135.8H737.89V200.6H736.24ZM742.62 135.8H744.27V200.6H742.62ZM749 135.8H750.65V200.6H749ZM755.38 135.8H757.03V200.6H755.38ZM761.76 135.8H763.15V200.6H761.76ZM768.14 135.8H769.23V200.6H768.14ZM774.52 135.8H775.3V200.6H774.52ZM780.9 135.8H781.37V200.6H780.9ZM787.28 135.8H787.44V200.6H787.28ZM793.66 135.8H793.96V200.6H793.66ZM800.04 135.8H800.34V200.6H800.04ZM806.42 135.8H806.72V200.6H806.42Z" fill="#000"/>
<path d="M321.98 133.2H323.63V135.8H321.98ZM328.36 133.2H330.01V135.8H328.36ZM334.74 133.2H336.39V135.8H334.74ZM341.12 133.2H342.77V135.8H341.12ZM347.5 133.2H349.15V135.8H347.5ZM353.88 133.2H355.53V135.8H353.88ZM360.26 133.2H361.65V135.8H360.26ZM366.64 133.2H367.73V135.8H366.64ZM373.02 133.2H373.8V135.8H373.02ZM379.4 133.2H379.87V135.8H379.4ZM385.78 133.2H385.94V135.8H385.78ZM392.16 133.2H392.46V135.8H392.16ZM398.54 133.2H398.84V135.8H398.54ZM723.48 133.2H725.13V135.8H723.48ZM729.86 133.2H731.51V135.8H729.86ZM736.24 133.2H737.89V135.8H736.24ZM742.62 133.2H744.27V135.8H742.62ZM749 133.2H750.65V135.8H749ZM755.38 133.2H757.03V135.8H755.38ZM761.76 133.2H763.15V135.8H761.76ZM768.14 133.2H769.23V135.8H768.14ZM774.52 133.2H775.3V135.8H774.52ZM780.9 133.2H781.37V135.8H780.9ZM787.28 133.2H787.44V135.8H787.28ZM793.66 133.2H793.96V135.8H793.66ZM800.04 133.2H800.34V135.8H800.04ZM806.42 133.2H806.72V135.8H806.42Z" fill="#003400"/>
<path d="M115.3 198.4V182.9" stroke="#008a00" stroke-width="1"/>
<path d="M516.3 198.4V182.9" stroke="#008a00" stroke-width="1"/>
<path d="M918 198.4V182.9" stroke="#008a00" stroke-width="1"/>
<path d="M51.8 41.8H54.8V110.5H51.8ZM58.1 41.8H61.5V110.5H58.1ZM64.4 41.8H68.5V110.5H64.4ZM70.7 41.8H75.2V110.5H70.7ZM77 41.8H82.9V110.5H77ZM83.3 41.8H88.6V110.5H83.3ZM89.6 41.8H95.95V110.5H89.6ZM95.9 41.8H102.25V110.5H95.9ZM102.2 41.8H108.55V110.5H102.2ZM108.5 41.8H110V110.5H108.5ZM453.3 41.8H454.8V110.5H453.3ZM459.6 41.8H461.6V110.5H459.6ZM465.9 41.8H468.4V110.5H465.9ZM472.2 41.8H476.7V110.5H472.2ZM478.5 41.8H483.8V110.5H478.5ZM484.8 41.8H490V110.5H484.8ZM491.1 41.8H497.45V110.5H491.1ZM497.4 41.8H503.75V110.5H497.4ZM503.7 41.8H510.05V110.5H503.7ZM510 41.8H511.5V110.5H510ZM854.8 41.8H856.8V110.5H854.8ZM861.1 41.8H863.6V110.5H861.1ZM867.4 41.8H872.4V110.5H867.4ZM873.7 41.8H878.2V110.5H873.7ZM880 41.8H885.5V110.5H880ZM886.3 41.8H891.6V110.5H886.3ZM892.6 41.8H898.95V110.5H892.6ZM898.9 41.8H905.25V110.5H898.9ZM905.2 41.8H911.55V110.5H905.2ZM911.5 41.8H913V110.5H911.5Z" fill="#009696"/>
<path d="M116.4 43.8H218V110.5H116.4ZM517.9 43.8H607V110.5H517.9ZM919.4 43.8H1024V110.5H919.4Z" fill="#009696"/>
<path d="M123.53 44.8V40.93M129.91 44.8V41.38M136.29 44.8V40.47M142.67 44.8V41.16M149.05 44.8V41.42M155.43 44.8V41.39M161.55 44.8V40.71M167.63 44.8V40.49M173.7 44.8V41.41M179.77 44.8V41.57M185.84 44.8V40.67M192.36 44.8V41.31M198.74 44.8V40.42M205.12 44.8V41M211.2 44.8V40.84M217.58 44.8V41.19M525.03 44.8V40.64M531.41 44.8V41.05M537.79 44.8V41.21M544.17 44.8V40.52M550.55 44.8V41.47M556.93 44.8V40.72M563.05 44.8V41.52M569.13 44.8V40.83M575.2 44.8V41.12M581.27 44.8V40.56M587.34 44.8V41.53M593.86 44.8V40.92M600.24 44.8V41.11M606.62 44.8V40.5M926.53 44.8V40.47M932.91 44.8V40.85M939.29 44.8V41.33M945.67 44.8V41.3M952.05 44.8V41.29M958.43 44.8V41.08M964.55 44.8V41.32M970.63 44.8V41.36M976.7 44.8V40.69M982.77 44.8V40.83M988.84 44.8V41.24M995.36 44.8V40.41M1001.74 44.8V41.34M1008.12 44.8V40.92M1014.2 44.8V41.41M1020.58 44.8V40.56" stroke="#009696" stroke-width="1.5" fill="none"/>
<path d="M218 43.8H227V110.5H218ZM607 43.8H628.5V110.5H607ZM1024 43.8H1030V110.5H1024Z" fill="#006464"/>
<path d="M114.3 43.8H116.4V110.5H114.3ZM515.8 43.8H517.9V110.5H515.8ZM917.3 43.8H919.4V110.5H917.3Z" fill="#004a4a"/>
<path d="M220.4 44.599999999999994V110.5M223.42 44.599999999999994V110.5M227.3 44.599999999999994V110.5M234.19 44.599999999999994V110.5M241.08 44.599999999999994V110.5M247.97 44.599999999999994V110.5M254.86 44.599999999999994V110.5M261.75 44.599999999999994V110.5M268.64 44.599999999999994V110.5M275.53 44.599999999999994V110.5M282.42 44.599999999999994V110.5M289.31 44.599999999999994V110.5M415.9 44.599999999999994V110.5M422.2 44.599999999999994V110.5M428.5 44.599999999999994V110.5M434.8 44.599999999999994V110.5M441.1 44.599999999999994V110.5M447.4 44.599999999999994V110.5M609.4 44.599999999999994V110.5M612.1 44.599999999999994V110.5M615.49 44.599999999999994V110.5M618.04 44.599999999999994V110.5M621.17 44.599999999999994V110.5M623.57 44.599999999999994V110.5M625.9 44.599999999999994V110.5M628.8 44.599999999999994V110.5M635.69 44.599999999999994V110.5M642.58 44.599999999999994V110.5M649.47 44.599999999999994V110.5M656.36 44.599999999999994V110.5M663.25 44.599999999999994V110.5M670.14 44.599999999999994V110.5M677.03 44.599999999999994V110.5M683.92 44.599999999999994V110.5M690.81 44.599999999999994V110.5M704.3 44.599999999999994V110.5M817.4 44.599999999999994V110.5M823.7 44.599999999999994V110.5M830 44.599999999999994V110.5M836.3 44.599999999999994V110.5M842.6 44.599999999999994V110.5M848.9 44.599999999999994V110.5M1026.4 44.599999999999994V110.5M1028.77 44.599999999999994V110.5M1030.3 44.599999999999994V110.5M1037.19 44.599999999999994V110.5M1044.08 44.599999999999994V110.5M1050.97 44.599999999999994V110.5" stroke="#007878" stroke-width="1.05" fill="none"/>
<path d="M51.8 45.9H54.8" stroke="#00e6e6" stroke-width="2" stroke-opacity="1" fill="none"/>
<path d="M51.8 44.7h2.02M53.82 44.37h0.98" stroke="#00e6e6" stroke-width="1.3" stroke-opacity="0.8" fill="none"/>
<path d="M58.1 45.9H61.5" stroke="#00e6e6" stroke-width="2" stroke-opacity="1" fill="none"/>
<path d="M60.61 44.56h0.89" stroke="#00e6e6" stroke-width="1.3" stroke-opacity="0.8" fill="none"/>
<path d="M64.4 45.9H68.5" stroke="#00e6e6" stroke-width="2" stroke-opacity="1" fill="none"/>
<path d="M64.4 44.81h2.04M67.74 44.79h0.76" stroke="#00e6e6" stroke-width="1.3" stroke-opacity="0.8" fill="none"/>
<path d="M70.7 45.9H75.2" stroke="#00e6e6" stroke-width="2" stroke-opacity="1" fill="none"/>
<path d="M70.7 44.12h2.19" stroke="#00e6e6" stroke-width="1.3" stroke-opacity="0.8" fill="none"/>
<path d="M77 45.9H82.9" stroke="#00e6e6" stroke-width="2" stroke-opacity="1" fill="none"/>
<path d="M77 44.65h0.94M77.94 44.83h0.93M80.67 44.29h2.17" stroke="#00e6e6" stroke-width="1.3" stroke-opacity="0.8" fill="none"/>
<path d="M83.3 45.9H88.6" stroke="#00e6e6" stroke-width="2" stroke-opacity="1" fill="none"/>
<path d="M83.3 44.29h0.85M84.15 44.12h1.4M85.56 44.8h2.19M87.74 44.21h0.86" stroke="#00e6e6" stroke-width="1.3" stroke-opacity="0.8" fill="none"/>
<path d="M89.6 45.9H95.95" stroke="#00e6e6" stroke-width="2" stroke-opacity="1" fill="none"/>
<path d="M89.6 44.65h1.4M92.01 44.38h1.5M95 44.87h0.95" stroke="#00e6e6" stroke-width="1.3" stroke-opacity="0.8" fill="none"/>
<path d="M95.9 45.9H102.25" stroke="#00e6e6" stroke-width="2" stroke-opacity="1" fill="none"/>
<path d="M97.94 44.31h1.18M99.12 44.51h0.9M100.02 44.39h1.37M102.2 44.54h0.05" stroke="#00e6e6" stroke-width="1.3" stroke-opacity="0.8" fill="none"/>
<path d="M102.2 45.9H108.55" stroke="#00e6e6" stroke-width="2" stroke-opacity="1" fill="none"/>
<path d="M105.99 44.44h1.36M107.35 44.41h1.2" stroke="#00e6e6" stroke-width="1.3" stroke-opacity="0.8" fill="none"/>
<path d="M108.5 45.9H110" stroke="#00e6e6" stroke-width="2" stroke-opacity="1" fill="none"/>
<path d="M108.5 44.9h1.37M109.87 44.84h0.13" stroke="#00e6e6" stroke-width="1.3" stroke-opacity="0.8" fill="none"/>
<path d="M114.6 45.9H121.01" stroke="#00e6e6" stroke-width="2" stroke-opacity="1" fill="none"/>
<path d="M114.6 44.4h1.16M115.76 44.19h1.14M118.87 44.66h2.07" stroke="#00e6e6" stroke-width="1.3" stroke-opacity="0.8" fill="none"/>
<path d="M120.98 45.9H127.39" stroke="#00e6e6" stroke-width="2" stroke-opacity="1" fill="none"/>
<path d="M120.98 44.88h1.57M123.35 44.57h1.99M125.34 44.6h2.05" stroke="#00e6e6" stroke-width="1.3" stroke-opacity="0.8" fill="none"/>
<path d="M127.36 45.9H133.77" stroke="#00e6e6" stroke-width="2" stroke-opacity="1" fill="none"/>
<path d="M127.36 44.67h1.84M129.2 44.59h1.35M130.55 44.6h1.75M132.3 44.59h1.47" stroke="#00e6e6" stroke-width="1.3" stroke-opacity="0.8" fill="none"/>
<path d="M133.74 45.9H140.15" stroke="#00e6e6" stroke-width="2" stroke-opacity="1" fill="none"/>
<path d="M136.37 44.28h1.53M138.9 44.52h1.25" stroke="#00e6e6" stroke-width="1.3" stroke-opacity="0.8" fill="none"/>
<path d="M140.12 45.9H146.53" stroke="#00e6e6" stroke-width="2" stroke-opacity="1" fill="none"/>
<path d="M140.12 44.24h1.94M142.06 44.61h1.95M145.97 44.41h0.56" stroke="#00e6e6" stroke-width="1.3" stroke-opacity="0.8" fill="none"/>
<path d="M146.5 45.9H152.91" stroke="#00e6e6" stroke-width="2" stroke-opacity="1" fill="none"/>
<path d="M148.46 44.3h0.97M149.44 44.74h0.94M150.38 44.17h1.53" stroke="#00e6e6" stroke-width="1.3" stroke-opacity="0.8" fill="none"/>
<path d="M152.88 45.9H159.29" stroke="#00e6e6" stroke-width="2" stroke-opacity="1" fill="none"/>
<path d="M152.88 44.48h1.77M157.58 44.29h1.31M158.89 44.4h0.4" stroke="#00e6e6" stroke-width="1.3" stroke-opacity="0.8" fill="none"/>
<path d="M159.26 45.9H165.67" stroke="#00e6e6" stroke-width="2" stroke-opacity="1" fill="none"/>
<path d="M159.26 44.56h0.82M160.08 44.67h0.88M160.97 44.29h1.18M162.15 44.61h1.97M164.12 44.44h1.55" stroke="#00e6e6" stroke-width="1.3" stroke-opacity="0.8" fill="none"/>
<path d="M165.64 45.9H172.05" stroke="#00e6e6" stroke-width="2" stroke-opacity="1" fill="none"/>
<path d="M165.64 44.4h1.91M167.55 44.39h0.86M168.41 44.43h1.8M171.92 44.56h0.13" stroke="#00e6e6" stroke-width="1.3" stroke-opacity="0.8" fill="none"/>
<path d="M172.02 45.9H178.43" stroke="#00e6e6" stroke-width="2" stroke-opacity="0.96" fill="none"/>
<path d="M172.02 44.88h2.09M174.11 44.63h1.8M175.91 44.7h1.26M177.17 44.5h1.26" stroke="#00e6e6" stroke-width="1.3" stroke-opacity="0.76" fill="none"/>
<path d="M178.4 45.9H184.81" stroke="#00e6e6" stroke-width="2" stroke-opacity="0.81" fill="none"/>
<path d="M180.46 44.47h0.84M182.74 44.81h1.38M184.13 44.51h0.68" stroke="#00e6e6" stroke-width="1.3" stroke-opacity="0.65" fill="none"/>
<path d="M184.78 45.9H191.19" stroke="#00e6e6" stroke-width="2" stroke-opacity="0.67" fill="none"/>
<path d="M186.73 44.13h1.84M188.57 44.72h1.75M190.32 44.28h0.87" stroke="#00e6e6" stroke-width="1.3" stroke-opacity="0.54" fill="none"/>
<path d="M191.16 45.9H197.57" stroke="#00e6e6" stroke-width="2" stroke-opacity="0.53" fill="none"/>
<path d="M192.07 44.7h0.94M193.01 44.64h1.59M194.6 44.14h1.8M196.4 44.57h1.17" stroke="#00e6e6" stroke-width="1.3" stroke-opacity="0.42" fill="none"/>
<path d="M197.54 45.9H203.95" stroke="#00e6e6" stroke-width="2" stroke-opacity="0.39" fill="none"/>
<path d="M199.74 44.37h2.02M201.76 44.89h1.53M203.28 44.35h0.67" stroke="#00e6e6" stroke-width="1.3" stroke-opacity="0.31" fill="none"/>
<path d="M203.92 45.9H210.33" stroke="#00e6e6" stroke-width="2" stroke-opacity="0.25" fill="none"/>
<path d="M205.08 44.44h1.58M206.66 44.79h0.87M209.45 44.14h0.88" stroke="#00e6e6" stroke-width="1.3" stroke-opacity="0.2" fill="none"/>
<path d="M210.3 45.9H216.71" stroke="#00e6e6" stroke-width="2" stroke-opacity="0.2" fill="none"/>
<path d="M210.3 44.47h1.55M211.85 44.39h1.48M213.34 44.84h1.92M215.26 44.35h1.45" stroke="#00e6e6" stroke-width="1.3" stroke-opacity="0.16" fill="none"/>
<path d="M216.68 45.9H218" stroke="#00e6e6" stroke-width="2" stroke-opacity="0.2" fill="none"/>
<path d="M216.68 44.55h1.32" stroke="#00e6e6" stroke-width="1.3" stroke-opacity="0.16" fill="none"/>
<path d="M453.3 45.9H454.8" stroke="#00e6e6" stroke-width="2" stroke-opacity="1" fill="none"/>
<path d="M453.3 44.74h1.25" stroke="#00e6e6" stroke-width="1.3" stroke-opacity="0.8" fill="none"/>
<path d="M459.6 45.9H461.6" stroke="#00e6e6" stroke-width="2" stroke-opacity="1" fill="none"/>
<path d="M459.6 44.46h1.92M461.52 44.8h0.08" stroke="#00e6e6" stroke-width="1.3" stroke-opacity="0.8" fill="none"/>
<path d="M465.9 45.9H468.4" stroke="#00e6e6" stroke-width="2" stroke-opacity="1" fill="none"/>
<path d="M465.9 44.61h0.88M467.65 44.24h0.75" stroke="#00e6e6" stroke-width="1.3" stroke-opacity="0.8" fill="none"/>
<path d="M472.2 45.9H476.7" stroke="#00e6e6" stroke-width="2" stroke-opacity="1" fill="none"/>
<path d="M472.2 44.74h2.09M475.79 44.27h0.91" stroke="#00e6e6" stroke-width="1.3" stroke-opacity="0.8" fill="none"/>
<path d="M478.5 45.9H483.8" stroke="#00e6e6" stroke-width="2" stroke-opacity="1" fill="none"/>
<path d="M478.5 44.83h1.97M480.47 44.18h1.09" stroke="#00e6e6" stroke-width="1.3" stroke-opacity="0.8" fill="none"/>
<path d="M484.8 45.9H490" stroke="#00e6e6" stroke-width="2" stroke-opacity="1" fill="none"/>
<path d="M485.96 44.15h1.76M487.72 44.77h1.77M489.49 44.57h0.51" stroke="#00e6e6" stroke-width="1.3" stroke-opacity="0.8" fill="none"/>
<path d="M491.1 45.9H497.45" stroke="#00e6e6" stroke-width="2" stroke-opacity="1" fill="none"/>
<path d="M491.1 44.22h1.25M492.35 44.77h2.08M495.44 44.13h2.01" stroke="#00e6e6" stroke-width="1.3" stroke-opacity="0.8" fill="none"/>
<path d="M497.4 45.9H503.75" stroke="#00e6e6" stroke-width="2" stroke-opacity="1" fill="none"/>
<path d="M498.73 44.17h1.11" stroke="#00e6e6" stroke-width="1.3" stroke-opacity="0.8" fill="none"/>
<path d="M503.7 45.9H510.05" stroke="#00e6e6" stroke-width="2" stroke-opacity="1" fill="none"/>
<path d="M505.89 44.38h1.54M507.43 44.84h1.85M509.28 44.79h0.77" stroke="#00e6e6" stroke-width="1.3" stroke-opacity="0.8" fill="none"/>
<path d="M510 45.9H511.5" stroke="#00e6e6" stroke-width="2" stroke-opacity="1" fill="none"/>
<path d="M510 44.17h1.5" stroke="#00e6e6" stroke-width="1.3" stroke-opacity="0.8" fill="none"/>
<path d="M516.1 45.9H522.51" stroke="#00e6e6" stroke-width="2" stroke-opacity="1" fill="none"/>
<path d="M516.1 44.81h1M517.1 44.84h1.98M519.08 44.87h0.85M521.21 44.37h1.3" stroke="#00e6e6" stroke-width="1.3" stroke-opacity="0.8" fill="none"/>
<path d="M522.48 45.9H528.89" stroke="#00e6e6" stroke-width="2" stroke-opacity="1" fill="none"/>
<path d="M522.48 44.69h1.43M524.96 44.55h1.22M526.18 44.73h0.93M527.11 44.13h1.63M528.75 44.62h0.14" stroke="#00e6e6" stroke-width="1.3" stroke-opacity="0.8" fill="none"/>
<path d="M528.86 45.9H535.27" stroke="#00e6e6" stroke-width="2" stroke-opacity="1" fill="none"/>
<path d="M528.86 44.38h0.98M531.17 44.85h1.03M533.46 44.22h1.81" stroke="#00e6e6" stroke-width="1.3" stroke-opacity="0.8" fill="none"/>
<path d="M535.24 45.9H541.65" stroke="#00e6e6" stroke-width="2" stroke-opacity="1" fill="none"/>
<path d="M536.17 44.53h0.96M537.14 44.23h0.96M538.1 44.39h1.55M539.65 44.26h1.08M540.73 44.8h0.92" stroke="#00e6e6" stroke-width="1.3" stroke-opacity="0.8" fill="none"/>
<path d="M541.62 45.9H548.03" stroke="#00e6e6" stroke-width="2" stroke-opacity="1" fill="none"/>
<path d="" stroke="#00e6e6" stroke-width="1.3" stroke-opacity="0.8" fill="none"/>
<path d="M548 45.9H554.41" stroke="#00e6e6" stroke-width="2" stroke-opacity="1" fill="none"/>
<path d="M548 44.12h1.02M549.02 44.33h1.35M550.37 44.56h2.05M552.41 44.73h1.13M553.54 44.3h0.87" stroke="#00e6e6" stroke-width="1.3" stroke-opacity="0.8" fill="none"/>
<path d="M554.38 45.9H560.79" stroke="#00e6e6" stroke-width="2" stroke-opacity="1" fill="none"/>
<path d="M556.02 44.65h0.86M556.88 44.75h1.94" stroke="#00e6e6" stroke-width="1.3" stroke-opacity="0.8" fill="none"/>
<path d="M560.76 45.9H567.17" stroke="#00e6e6" stroke-width="2" stroke-opacity="1" fill="none"/>
<path d="M560.76 44.17h1.38M563.28 44.38h1.75M565.03 44.28h1" stroke="#00e6e6" stroke-width="1.3" stroke-opacity="0.8" fill="none"/>
<path d="M567.14 45.9H573.55" stroke="#00e6e6" stroke-width="2" stroke-opacity="1" fill="none"/>
<path d="M569.34 44.72h1.47M572.88 44.6h0.67" stroke="#00e6e6" stroke-width="1.3" stroke-opacity="0.8" fill="none"/>
<path d="M573.52 45.9H579.93" stroke="#00e6e6" stroke-width="2" stroke-opacity="0.96" fill="none"/>
<path d="M576.43 44.87h1.29" stroke="#00e6e6" stroke-width="1.3" stroke-opacity="0.76" fill="none"/>
<path d="M579.9 45.9H586.31" stroke="#00e6e6" stroke-width="2" stroke-opacity="0.81" fill="none"/>
<path d="M583.85 44.45h1.92" stroke="#00e6e6" stroke-width="1.3" stroke-opacity="0.65" fill="none"/>
<path d="M586.28 45.9H592.69" stroke="#00e6e6" stroke-width="2" stroke-opacity="0.67" fill="none"/>
<path d="M586.28 44.87h2.02M590.81 44.77h1.88" stroke="#00e6e6" stroke-width="1.3" stroke-opacity="0.54" fill="none"/>
<path d="M592.66 45.9H599.07" stroke="#00e6e6" stroke-width="2" stroke-opacity="0.53" fill="none"/>
<path d="M592.66 44.47h1.12M593.78 44.83h1.13" stroke="#00e6e6" stroke-width="1.3" stroke-opacity="0.42" fill="none"/>
<path d="M599.04 45.9H605.45" stroke="#00e6e6" stroke-width="2" stroke-opacity="0.39" fill="none"/>
<path d="M601.16 44.62h1.37M602.53 44.58h1.97" stroke="#00e6e6" stroke-width="1.3" stroke-opacity="0.31" fill="none"/>
<path d="M605.42 45.9H607" stroke="#00e6e6" stroke-width="2" stroke-opacity="0.25" fill="none"/>
<path d="M605.42 44.11h0.81" stroke="#00e6e6" stroke-width="1.3" stroke-opacity="0.2" fill="none"/>
<path d="M854.8 45.9H856.8" stroke="#00e6e6" stroke-width="2" stroke-opacity="1" fill="none"/>
<path d="M854.8 44.47h1.39M856.19 44.38h0.61" stroke="#00e6e6" stroke-width="1.3" stroke-opacity="0.8" fill="none"/>
<path d="M861.1 45.9H863.6" stroke="#00e6e6" stroke-width="2" stroke-opacity="1" fill="none"/>
<path d="M861.1 44.33h1.98M863.08 44.66h0.52" stroke="#00e6e6" stroke-width="1.3" stroke-opacity="0.8" fill="none"/>
<path d="M867.4 45.9H872.4" stroke="#00e6e6" stroke-width="2" stroke-opacity="1" fill="none"/>
<path d="M868.82 44.65h1.93M871.61 44.87h0.79" stroke="#00e6e6" stroke-width="1.3" stroke-opacity="0.8" fill="none"/>
<path d="M873.7 45.9H878.2" stroke="#00e6e6" stroke-width="2" stroke-opacity="1" fill="none"/>
<path d="M873.7 44.81h1.31M876.66 44.86h1.35" stroke="#00e6e6" stroke-width="1.3" stroke-opacity="0.8" fill="none"/>
<path d="M880 45.9H885.5" stroke="#00e6e6" stroke-width="2" stroke-opacity="1" fill="none"/>
<path d="M881.07 44.1h1.03M884.57 44.18h0.93" stroke="#00e6e6" stroke-width="1.3" stroke-opacity="0.8" fill="none"/>
<path d="M886.3 45.9H891.6" stroke="#00e6e6" stroke-width="2" stroke-opacity="1" fill="none"/>
<path d="M887.87 44.84h1.52" stroke="#00e6e6" stroke-width="1.3" stroke-opacity="0.8" fill="none"/>
<path d="M892.6 45.9H898.95" stroke="#00e6e6" stroke-width="2" stroke-opacity="1" fill="none"/>
<path d="M895.33 44.52h1.68M898.76 44.88h0.19" stroke="#00e6e6" stroke-width="1.3" stroke-opacity="0.8" fill="none"/>
<path d="M898.9 45.9H905.25" stroke="#00e6e6" stroke-width="2" stroke-opacity="1" fill="none"/>
<path d="M899.78 44.46h1.76M905.21 44.21h0.04" stroke="#00e6e6" stroke-width="1.3" stroke-opacity="0.8" fill="none"/>
<path d="M905.2 45.9H911.55" stroke="#00e6e6" stroke-width="2" stroke-opacity="1" fill="none"/>
<path d="M907.33 44.56h1M908.34 44.7h0.87M909.2 44.71h1.7M910.9 44.44h0.65" stroke="#00e6e6" stroke-width="1.3" stroke-opacity="0.8" fill="none"/>
<path d="M911.5 45.9H913" stroke="#00e6e6" stroke-width="2" stroke-opacity="1" fill="none"/>
<path d="" stroke="#00e6e6" stroke-width="1.3" stroke-opacity="0.8" fill="none"/>
<path d="M917.6 45.9H924.01" stroke="#00e6e6" stroke-width="2" stroke-opacity="1" fill="none"/>
<path d="M922.65 44.56h1.19" stroke="#00e6e6" stroke-width="1.3" stroke-opacity="0.8" fill="none"/>
<path d="M923.98 45.9H930.39" stroke="#00e6e6" stroke-width="2" stroke-opacity="1" fill="none"/>
<path d="M923.98 44.51h1.29M925.27 44.69h2.03M927.29 44.14h1.04M928.33 44.87h1.22M929.55 44.35h0.84" stroke="#00e6e6" stroke-width="1.3" stroke-opacity="0.8" fill="none"/>
<path d="M930.36 45.9H936.77" stroke="#00e6e6" stroke-width="2" stroke-opacity="1" fill="none"/>
<path d="M930.36 44.36h2.12M932.48 44.31h1.41M933.89 44.87h1.35M935.25 44.83h1.17" stroke="#00e6e6" stroke-width="1.3" stroke-opacity="0.8" fill="none"/>
<path d="M936.74 45.9H943.15" stroke="#00e6e6" stroke-width="2" stroke-opacity="1" fill="none"/>
<path d="M938.43 44.71h1.24M939.67 44.64h1.46M941.13 44.39h1.85M942.98 44.33h0.17" stroke="#00e6e6" stroke-width="1.3" stroke-opacity="0.8" fill="none"/>
<path d="M943.12 45.9H949.53" stroke="#00e6e6" stroke-width="2" stroke-opacity="1" fill="none"/>
<path d="M943.12 44.72h1.68M945.66 44.85h1.59M947.25 44.16h1.17" stroke="#00e6e6" stroke-width="1.3" stroke-opacity="0.8" fill="none"/>
<path d="M949.5 45.9H955.91" stroke="#00e6e6" stroke-width="2" stroke-opacity="1" fill="none"/>
<path d="M949.5 44.75h1.75M951.25 44.62h0.96" stroke="#00e6e6" stroke-width="1.3" stroke-opacity="0.8" fill="none"/>
<path d="M955.88 45.9H962.29" stroke="#00e6e6" stroke-width="2" stroke-opacity="1" fill="none"/>
<path d="M957.23 44.41h1.84M959.07 44.25h1.93M961 44.52h1.29" stroke="#00e6e6" stroke-width="1.3" stroke-opacity="0.8" fill="none"/>
<path d="M962.26 45.9H968.67" stroke="#00e6e6" stroke-width="2" stroke-opacity="1" fill="none"/>
<path d="M964 44.15h0.99M964.98 44.78h1.38M966.36 44.42h1.73M968.1 44.78h0.57" stroke="#00e6e6" stroke-width="1.3" stroke-opacity="0.8" fill="none"/>
<path d="M968.64 45.9H975.05" stroke="#00e6e6" stroke-width="2" stroke-opacity="1" fill="none"/>
<path d="M971.56 44.82h1.86" stroke="#00e6e6" stroke-width="1.3" stroke-opacity="0.8" fill="none"/>
<path d="M975.02 45.9H981.43" stroke="#00e6e6" stroke-width="2" stroke-opacity="0.96" fill="none"/>
<path d="M976.97 44.66h2.03M979 44.32h1.79M980.78 44.76h0.65" stroke="#00e6e6" stroke-width="1.3" stroke-opacity="0.76" fill="none"/>
<path d="M981.4 45.9H987.81" stroke="#00e6e6" stroke-width="2" stroke-opacity="0.81" fill="none"/>
<path d="M981.4 44.28h1.18" stroke="#00e6e6" stroke-width="1.3" stroke-opacity="0.65" fill="none"/>
<path d="M987.78 45.9H994.19" stroke="#00e6e6" stroke-width="2" stroke-opacity="0.67" fill="none"/>
<path d="M987.78 44.6h1.26M989.04 44.15h0.99M990.03 44.75h1.42M992.31 44.6h0.95M993.26 44.55h0.93" stroke="#00e6e6" stroke-width="1.3" stroke-opacity="0.54" fill="none"/>
<path d="M994.16 45.9H1000.57" stroke="#00e6e6" stroke-width="2" stroke-opacity="0.53" fill="none"/>
<path d="M996.36 44.12h1.93M998.29 44.5h1.89M1000.18 44.6h0.39" stroke="#00e6e6" stroke-width="1.3" stroke-opacity="0.42" fill="none"/>
<path d="M1000.54 45.9H1006.95" stroke="#00e6e6" stroke-width="2" stroke-opacity="0.39" fill="none"/>
<path d="M1000.54 44.42h1.81M1002.35 44.28h1.52" stroke="#00e6e6" stroke-width="1.3" stroke-opacity="0.31" fill="none"/>
<path d="M1006.92 45.9H1013.33" stroke="#00e6e6" stroke-width="2" stroke-opacity="0.25" fill="none"/>
<path d="M1008.18 44.21h0.9M1010.52 44.37h1.79M1012.31 44.33h1.02" stroke="#00e6e6" stroke-width="1.3" stroke-opacity="0.2" fill="none"/>
<path d="M1013.3 45.9H1019.71" stroke="#00e6e6" stroke-width="2" stroke-opacity="0.2" fill="none"/>
<path d="M1014.37 44.26h1.52M1015.89 44.31h1.79" stroke="#00e6e6" stroke-width="1.3" stroke-opacity="0.16" fill="none"/>
<path d="M1019.68 45.9H1024" stroke="#00e6e6" stroke-width="2" stroke-opacity="0.2" fill="none"/>
<path d="M1023.62 44.11h0.38" stroke="#00e6e6" stroke-width="1.3" stroke-opacity="0.16" fill="none"/>
<path d="M60.7 43.599999999999994v-1.41M67 43.599999999999994v-0.68M74.6 43.599999999999994v-0.57M77 43.599999999999994v-1.64M85.9 43.599999999999994v-0.57M92.2 43.599999999999994v-1.85M103.5 43.599999999999994v-0.42M108.5 43.599999999999994v-1.73M115.9 43.599999999999994v-1.82M118.5 43.599999999999994v-0.92M129.96 43.599999999999994v-1.35M131.26 43.599999999999994v-0.72M138.94 43.599999999999994v-1.56M140.12 43.599999999999994v-1.15M150.4 43.599999999999994v-1.85M152.88 43.599999999999994v-0.78M163.16 43.599999999999994v-0.55M166.94 43.599999999999994v-0.48M178.4 43.599999999999994v-0.43M181 43.599999999999994v-1.96M183.6 43.599999999999994v-1.69M184.78 43.599999999999994v-1.22M186.08 43.599999999999994v-1.66M189.98 43.599999999999994v-1.76M198.84 43.599999999999994v-0.49M203.92 43.599999999999994v-1.59M205.22 43.599999999999994v-1.73M209.12 43.599999999999994v-1.44M212.9 43.599999999999994v-1.96M216.68 43.599999999999994v-1.57M454.6 43.599999999999994v-0.99M465.9 43.599999999999994v-1.37M473.5 43.599999999999994v-0.52M474.8 43.599999999999994v-1.51M493.7 43.599999999999994v-1.49M498.7 43.599999999999994v-1.91M507.6 43.599999999999994v-1.11M525.08 43.599999999999994v-0.77M536.54 43.599999999999994v-1.72M544.22 43.599999999999994v-1.25M554.38 43.599999999999994v-0.74M558.28 43.599999999999994v-0.82M562.06 43.599999999999994v-1.1M571.04 43.599999999999994v-1.51M583.8 43.599999999999994v-0.51M585.1 43.599999999999994v-0.98M586.28 43.599999999999994v-0.58M593.96 43.599999999999994v-0.56M601.64 43.599999999999994v-1.89M605.42 43.599999999999994v-1.73M867.4 43.599999999999994v-0.7M870 43.599999999999994v-1.45M875 43.599999999999994v-0.63M876.3 43.599999999999994v-1.97M883.9 43.599999999999994v-0.42M886.3 43.599999999999994v-1.94M890.2 43.599999999999994v-1.66M895.2 43.599999999999994v-0.8M902.8 43.599999999999994v-0.75M910.4 43.599999999999994v-1.46M917.6 43.599999999999994v-1.1M918.9 43.599999999999994v-1.14M921.5 43.599999999999994v-0.59M923.98 43.599999999999994v-0.77M926.58 43.599999999999994v-0.51M932.96 43.599999999999994v-0.76M940.64 43.599999999999994v-1.91M944.42 43.599999999999994v-1.78M947.02 43.599999999999994v-0.82M952.1 43.599999999999994v-1.12M958.48 43.599999999999994v-1.97M961.08 43.599999999999994v-0.42M964.86 43.599999999999994v-1.15M973.84 43.599999999999994v-1.69M981.4 43.599999999999994v-0.76M985.3 43.599999999999994v-0.75M986.6 43.599999999999994v-1.1M987.78 43.599999999999994v-0.71M995.46 43.599999999999994v-1.92M1019.68 43.599999999999994v-1M1020.98 43.599999999999994v-1.72M1022.28 43.599999999999994v-1.37" stroke="#00e6e6" stroke-width="0.8" stroke-opacity="0.6" fill="none"/>
<path d="M110.2 45.8 C110.5 61.8 111.3 76.8 114.5 84.3" stroke="#00e6e6" stroke-opacity="0.8" stroke-width="1" fill="none"/>
<path d="M511.7 45.8 C512 61.8 512.8 76.8 516 84.3" stroke="#00e6e6" stroke-opacity="0.8" stroke-width="1" fill="none"/>
<path d="M913.2 45.8 C913.5 61.8 914.3 76.8 917.5 84.3" stroke="#00e6e6" stroke-opacity="0.8" stroke-width="1" fill="none"/>
<polyline points="222 112.54 223.3 112.63 224.6 112.48 225.9 113.37 227.2 113.21 228.5 113.2 229.8 113.25 231.1 113.49 232.4 113.06 233.7 112.55 235 113.16 236.3 112.47 237.6 112.96 238.9 112.32 240.2 113.3 241.5 112.78 242.8 112.49 244.1 113.39 245.4 112.22 246.7 113.4 248 113.16 249.3 112.31 250.6 113.17 251.9 112.9 253.2 113.37 254.5 112.92 255.8 112.7 257.1 113.41 258.4 112.22 259.7 113.19 261 112.24 262.3 112.49 263.6 112.26 264.9 113.32 266.2 112.72 267.5 113.12 268.8 112.46 270.1 113.12 271.4 113.01 272.7 112.24 274 112.79 275.3 113.11 276.6 112.4 277.9 113.02 279.2 112.49 280.5 112.62 281.8 113.39 283.1 113.42 284.4 113.5 285.7 112.7 287 112.9 288.3 113.23 289.6 113.16 290.9 112.74 292.2 113.31 293.5 112.66 294.8 113.43 296.1 112.76 297.4 112.27 298.7 113.15" stroke="#00e6e6" stroke-opacity="0.5" stroke-width="2" fill="none"/>
<polyline points="623.5 112.3 624.8 113.05 626.1 112.17 627.4 113.48 628.7 112.86 630 113.14 631.3 112.28 632.6 112.99 633.9 112.63 635.2 112.45 636.5 113.24 637.8 112.15 639.1 112.77 640.4 112.22 641.7 113.29 643 113.35 644.3 112.15 645.6 112.75 646.9 112.76 648.2 113.11 649.5 113.12 650.8 112.58 652.1 113.41 653.4 112.36 654.7 112.29 656 113.24 657.3 112.27 658.6 112.36 659.9 112.8 661.2 112.57 662.5 112.33 663.8 113.4 665.1 112.76 666.4 113.2 667.7 112.45 669 113.38 670.3 112.41 671.6 113.37 672.9 112.96 674.2 113.46 675.5 113.18 676.8 112.98 678.1 112.85 679.4 113.3 680.7 112.72 682 112.24 683.3 113.38 684.6 113.23 685.9 113.05 687.2 113.14 688.5 112.42 689.8 112.75 691.1 113.25 692.4 113.45 693.7 113.39 695 112.32 696.3 113.06 697.6 112.88 698.9 112.67 700.2 112.33 701.5 112.29" stroke="#00e6e6" stroke-opacity="0.5" stroke-width="2" fill="none"/>
<polyline points="1025 112.76 1026.3 112.79 1027.6 112.47 1028.9 112.61 1030.2 112.88 1031.5 113.17 1032.8 112.93 1034.1 112.33 1035.4 113.34 1036.7 112.61 1038 113.44 1039.3 113.47 1040.6 112.3 1041.9 112.92 1043.2 113.45 1044.5 112.64 1045.8 112.87 1047.1 112.54 1048.4 112.14 1049.7 112.39 1051 112.27 1052.3 112.5" stroke="#00e6e6" stroke-opacity="0.5" stroke-width="2" fill="none"/>
<path d="M220.4 111.5v3.46M223.42 111.5v3.33M227.3 111.5v4.1M234.19 111.5v3.57M241.08 111.5v2.92M247.97 111.5v4.1M254.86 111.5v3.47M261.75 111.5v3.29M268.64 111.5v3.93M275.53 111.5v3.54M282.42 111.5v2.92M289.31 111.5v3.41M612.1 111.5v2.8M615.49 111.5v4.14M618.04 111.5v2.69M621.17 111.5v4.15M623.57 111.5v2.33M625.9 111.5v2.22M628.8 111.5v3.31M635.69 111.5v2.61M642.58 111.5v3.21M649.47 111.5v2.44M656.36 111.5v3.87M663.25 111.5v3.54M670.14 111.5v3.57M677.03 111.5v4.05M683.92 111.5v4.18M690.81 111.5v3.56M704.3 111.5v3.63M1026.4 111.5v2.2M1028.77 111.5v2.3M1030.3 111.5v3.05M1037.19 111.5v4.14M1044.08 111.5v2.83M1050.97 111.5v3.34" stroke="#00e6e6" stroke-width="1.7" stroke-opacity="0.8" fill="none"/>
<polyline points="49.3 110.74 50.8 110.87 52.3 111.05 53.8 110.37 55.3 110.49 56.8 110.34 58.3 111.35 59.8 110.38 61.3 110.36 62.8 110.83 64.3 110.9 65.8 111.26 67.3 110.27 68.8 110.48 70.3 110.4 71.8 110.9 73.3 110.74 74.8 110.69 76.3 111.27 77.8 110.99 79.3 111.23 80.8 111.35 82.3 110.52 83.8 111.33 85.3 110.69 86.8 110.26 88.3 111.3 89.8 110.32 91.3 110.22 92.8 110.55 94.3 110.55 95.8 111.36 97.3 111.24 98.8 110.7 100.3 110.84 101.8 111.22 103.3 111.17 104.8 110.98 106.3 110.82 107.8 110.34 109.3 110.49 110.8 110.99 112.3 110.9 113.8 111.16 115.3 111.28 116.8 111.35 118.3 110.43 119.8 110.29 121.3 111.28 122.8 110.88 124.3 110.42 125.8 111.03 127.3 110.51 128.8 110.48 130.3 110.64 131.8 110.83 133.3 111.01 134.8 110.29 136.3 111.09 137.8 110.95 139.3 110.77 140.8 111.01 142.3 111.16 143.8 110.21 145.3 110.77 146.8 111.01 148.3 111.05 149.8 110.98 151.3 110.42 152.8 111.35 154.3 111.14 155.8 110.48 157.3 110.72 158.8 111.35 160.3 110.45 161.8 110.69 163.3 111.35 164.8 111.28 166.3 110.48 167.8 111.08 169.3 110.63 170.8 111 172.3 111.12 173.8 110.35 175.3 110.47 176.8 110.46 178.3 110.52 179.8 110.24 181.3 110.36 182.8 110.69 184.3 110.7 185.8 110.29 187.3 110.9 188.8 111.33 190.3 110.89 191.8 110.63 193.3 111.05 194.8 110.72 196.3 110.41 197.8 110.78 199.3 110.22 200.8 111.01 202.3 110.39 203.8 110.64 205.3 111.35 206.8 111.12 208.3 111.2 209.8 110.97 211.3 110.96 212.8 111.05 214.3 111.36 215.8 110.44 217.3 111.12 218.8 110.56 220.3 111.21 221.8 111.89 223.3 111.62 224.8 111.92 226.3 111.95 227.8 111.61 229.3 111.14 230.8 110.92 232.3 111.54 233.8 111.77 235.3 111.23 236.8 110.98 238.3 110.91 239.8 111.11 241.3 111.74 242.8 110.9 244.3 111.18 245.8 111.22 247.3 111.75 248.8 112.08 250.3 110.92 251.8 111.04 253.3 112.02 254.8 112.06 256.3 111.08 257.8 111.3 259.3 111.53 260.8 111.28 262.3 111.4 263.8 111.47 265.3 111.21 266.8 110.97 268.3 111 269.8 111.09 271.3 111.01 272.8 111.65 274.3 111.74 275.8 111.22 277.3 111.85 278.8 111.77 280.3 111.31 281.8 111.49 283.3 111.13 284.8 112.01 286.3 111.57 287.8 110.96 289.3 111.08 290.8 111.73 292.3 111.36 293.8 111.76 295.3 111.18 296.8 111.86 298.3 111.86 299.8 111.01 301.3 111.6 302.8 111.13 304.3 111.75 305.8 111.86 307.3 111.85 308.8 111.18 310.3 110.01 311.8 110.7 313.3 110.58 314.8 110.07 316.3 110.13 317.8 110.6 319.3 110.03 320.8 110.66 322.3 110.19 323.8 110.21 325.3 110.41 326.8 110.54 328.3 110.77 329.8 109.94 331.3 110.77 332.8 110.17 334.3 110.25 335.8 110.67 337.3 110.73 338.8 110.64 340.3 110.98 341.8 110.15 343.3 110.27 344.8 110.7 346.3 110.21 347.8 110.09 349.3 110.17 350.8 110.83 352.3 110.89 353.8 110.76 355.3 111.05 356.8 110.85 358.3 110.27 359.8 110.28 361.3 110.77 362.8 109.97 364.3 110.63 365.8 110.01 367.3 109.96 368.8 110.52 370.3 110.08 371.8 111.02 373.3 110.95 374.8 110.45 376.3 110.14 377.8 110.04 379.3 110.51 380.8 110.53 382.3 110.34 383.8 110.76 385.3 110.54 386.8 110.83 388.3 110.03 389.8 109.98 391.3 110.36 392.8 110.48 394.3 110.2 395.8 110.7 397.3 110.17 398.8 110.28 400.3 110.47 401.8 110.75 403.3 110.82 404.8 110.35 406.3 110.44 407.8 111.01 409.3 111.02 410.8 110.64 412.3 110.33 413.8 110.75 415.3 110.96 416.8 110.53 418.3 110.24 419.8 111.38 421.3 111.29 422.8 110.35 424.3 110.76 425.8 110.94 427.3 110.56 428.8 110.28 430.3 111.1 431.8 111.12 433.3 110.72 434.8 110.3 436.3 110.67 437.8 110.31 439.3 111.36 440.8 110.26 442.3 110.55 443.8 111.12 445.3 110.36 446.8 110.33 448.3 110.28 449.8 110.4 451.3 110.84 452.8 111.2 454.3 110.4 455.8 110.41 457.3 111.12 458.8 110.71 460.3 110.61 461.8 110.35 463.3 110.49 464.8 111.37 466.3 110.34 467.8 110.51 469.3 111.09 470.8 111.27 472.3 111.29 473.8 110.77 475.3 111.35 476.8 110.92 478.3 110.55 479.8 110.76 481.3 111.06 482.8 111.08 484.3 110.36 485.8 110.43 487.3 111.35 488.8 110.33 490.3 111.18 491.8 110.61 493.3 110.5 494.8 110.51 496.3 110.76 497.8 111.39 499.3 110.38 500.8 111.23 502.3 110.59 503.8 110.41 505.3 111.09 506.8 110.61 508.3 110.43 509.8 110.7 511.3 111.19 512.8 111.24 514.3 110.89 515.8 110.21 517.3 111.12 518.8 110.93 520.3 111.28 521.8 111.34 523.3 110.59 524.8 111.22 526.3 111.18 527.8 110.52 529.3 110.64 530.8 110.65 532.3 110.62 533.8 110.65 535.3 110.33 536.8 110.47 538.3 111.29 539.8 110.69 541.3 110.96 542.8 111.26 544.3 111.11 545.8 110.49 547.3 111.3 548.8 111.17 550.3 111.39 551.8 111.07 553.3 111.11 554.8 111.18 556.3 110.5 557.8 110.99 559.3 110.66 560.8 111.21 562.3 110.36 563.8 110.85 565.3 110.6 566.8 111.18 568.3 110.61 569.8 111.21 571.3 111.22 572.8 111.25 574.3 110.37 575.8 111.33 577.3 111.09 578.8 111.01 580.3 110.98 581.8 110.26 583.3 111.24 584.8 110.86 586.3 110.75 587.8 110.61 589.3 111.14 590.8 111.14 592.3 111.24 593.8 110.46 595.3 110.61 596.8 110.5 598.3 110.32 599.8 110.59 601.3 110.23 602.8 111.16 604.3 110.47 605.8 110.28 607.3 110.28 608.8 111.09 610.3 110.44 611.8 110.75 613.3 110.68 614.8 111.16 616.3 111.34 617.8 110.57 619.3 110.96 620.8 111.27 622.3 111.46 623.8 111.98 625.3 111.78 626.8 111.27 628.3 111.95 629.8 111.59 631.3 111.03 632.8 111.6 634.3 111.9 635.8 111.52 637.3 111.48 638.8 111.4 640.3 111.96 641.8 111.7 643.3 111.15 644.8 111.33 646.3 111.34 647.8 112.05 649.3 111.74 650.8 111.05 652.3 112 653.8 110.94 655.3 111.61 656.8 111.42 658.3 111.76 659.8 111.42 661.3 111.01 662.8 111.53 664.3 111.88 665.8 111.85 667.3 111.33 668.8 111.17 670.3 111.79 671.8 111.86 673.3 111.16 674.8 111.96 676.3 112.09 677.8 111.42 679.3 111.36 680.8 111.75 682.3 112.02 683.8 111.14 685.3 111.26 686.8 111.29 688.3 111.78 689.8 111.12 691.3 111.56 692.8 111.5 694.3 111.7 695.8 111.07 697.3 112.05 698.8 112.1 700.3 111.57 701.8 111.85 703.3 111.12 704.8 111.99 706.3 111.56 707.8 111.81 709.3 111.94 710.8 110.33 712.3 111.01 713.8 110.15 715.3 109.93 716.8 110.5 718.3 110.98 719.8 110.98 721.3 111.05 722.8 110.51 724.3 111.02 725.8 110.57 727.3 110.07 728.8 110.66 730.3 110.86 731.8 110.41 733.3 110.62 734.8 110.21 736.3 110.23 737.8 110.4 739.3 110.52 740.8 110.46 742.3 110.01 743.8 109.91 745.3 110.31 746.8 110.76 748.3 110.8 749.8 110.18 751.3 110.21 752.8 110.52 754.3 110.11 755.8 110.62 757.3 110.98 758.8 110.14 760.3 110.6 761.8 110.76 763.3 110.8 764.8 110.75 766.3 110.75 767.8 110.23 769.3 110.91 770.8 111.01 772.3 109.96 773.8 111.03 775.3 110.43 776.8 110 778.3 109.98 779.8 110.86 781.3 110.71 782.8 110.07 784.3 110.45 785.8 110.67 787.3 111.1 788.8 110.3 790.3 110.82 791.8 110.19 793.3 110.14 794.8 110.09 796.3 110.39 797.8 110.64 799.3 110.26 800.8 110.09 802.3 110.16 803.8 110 805.3 110.13 806.8 110.28 808.3 110.51 809.8 110.12 811.3 110.48 812.8 110.43 814.3 111.37 815.8 110.78 817.3 111.33 818.8 110.77 820.3 110.44 821.8 110.91 823.3 110.37 824.8 110.4 826.3 110.29 827.8 111.04 829.3 111.36 830.8 110.68 832.3 110.62 833.8 110.71 835.3 110.62 836.8 111.03 838.3 110.67 839.8 110.38 841.3 111.24 842.8 110.89 844.3 110.21 845.8 111.22 847.3 111.07 848.8 110.63 850.3 110.96 851.8 111.3 853.3 110.68 854.8 110.72 856.3 110.56 857.8 110.87 859.3 111 860.8 111.08 862.3 111.34 863.8 110.37 865.3 110.64 866.8 111.22 868.3 111.15 869.8 110.91 871.3 111.01 872.8 110.61 874.3 111.33 875.8 110.86 877.3 110.68 878.8 110.42 880.3 110.34 881.8 111.28 883.3 111.16 884.8 110.23 886.3 110.59 887.8 110.78 889.3 110.79 890.8 110.64 892.3 111.27 893.8 110.62 895.3 110.84 896.8 111.32 898.3 110.97 899.8 110.77 901.3 110.6 902.8 110.66 904.3 110.93 905.8 111.14 907.3 110.51 908.8 110.64 910.3 110.67 911.8 110.64 913.3 111.3 914.8 110.85 916.3 110.53 917.8 110.6 919.3 111.19 920.8 110.39 922.3 111.03 923.8 110.23 925.3 110.43 926.8 110.27 928.3 111.17 929.8 110.38 931.3 110.47 932.8 110.27 934.3 110.52 935.8 111.08 937.3 111.06 938.8 111.29 940.3 111.34 941.8 110.86 943.3 111.31 944.8 110.31 946.3 111.31 947.8 110.72 949.3 110.43 950.8 111.1 952.3 111.23 953.8 110.66 955.3 110.31 956.8 111.25 958.3 111.1 959.8 110.92 961.3 111.37 962.8 110.25 964.3 110.27 965.8 110.35 967.3 110.23 968.8 111.05 970.3 110.96 971.8 110.33 973.3 110.39 974.8 110.42 976.3 110.93 977.8 111.01 979.3 111.36 980.8 110.63 982.3 111.37 983.8 110.72 985.3 110.67 986.8 110.5 988.3 110.48 989.8 111.37 991.3 111.39 992.8 111.05 994.3 110.41 995.8 110.42 997.3 110.38 998.8 110.62 1000.3 111.08 1001.8 110.27 1003.3 110.84 1004.8 111.02 1006.3 110.24 1007.8 110.73 1009.3 111.15 1010.8 110.89 1012.3 110.74 1013.8 111.26 1015.3 110.92 1016.8 110.6 1018.3 110.68 1019.8 111.33 1021.3 111.23 1022.8 111.3 1024.3 111.57 1025.8 111.07 1027.3 111.11 1028.8 111.36 1030.3 111.73 1031.8 110.91 1033.3 111.86 1034.8 111.84 1036.3 111.52 1037.8 110.91 1039.3 111.86 1040.8 111.4 1042.3 111.7 1043.8 111.58 1045.3 111.77 1046.8 111.39 1048.3 112.05 1049.8 112.05 1051.3 112.01 1052.8 111.64" stroke="#00e6e6" stroke-width="2.5" fill="none" stroke-linejoin="round"/>
<path d="M120.98 49.8H122.63V112.7H120.98ZM127.36 49.8H129.01V112.7H127.36ZM133.74 49.8H135.39V112.7H133.74ZM140.12 49.8H141.77V112.7H140.12ZM146.5 49.8H148.15V112.7H146.5ZM152.88 49.8H154.53V112.7H152.88ZM159.26 49.8H160.65V112.7H159.26ZM165.64 49.8H166.73V112.7H165.64ZM172.02 49.8H172.8V112.7H172.02ZM178.4 49.8H178.87V112.7H178.4ZM184.78 49.8H184.94V112.7H184.78ZM191.16 49.8H191.46V112.7H191.16ZM197.54 49.8H197.84V112.7H197.54ZM203.92 49.8H204.22V112.7H203.92ZM522.48 49.8H524.13V112.7H522.48ZM528.86 49.8H530.51V112.7H528.86ZM535.24 49.8H536.89V112.7H535.24ZM541.62 49.8H543.27V112.7H541.62ZM548 49.8H549.65V112.7H548ZM554.38 49.8H556.03V112.7H554.38ZM560.76 49.8H562.15V112.7H560.76ZM567.14 49.8H568.23V112.7H567.14ZM573.52 49.8H574.3V112.7H573.52ZM579.9 49.8H580.37V112.7H579.9ZM586.28 49.8H586.44V112.7H586.28ZM592.66 49.8H592.96V112.7H592.66ZM599.04 49.8H599.34V112.7H599.04ZM605.42 49.8H605.72V112.7H605.42ZM923.98 49.8H925.63V112.7H923.98ZM930.36 49.8H932.01V112.7H930.36ZM936.74 49.8H938.39V112.7H936.74ZM943.12 49.8H944.77V112.7H943.12ZM949.5 49.8H951.15V112.7H949.5ZM955.88 49.8H957.53V112.7H955.88ZM962.26 49.8H963.65V112.7H962.26ZM968.64 49.8H969.73V112.7H968.64ZM975.02 49.8H975.8V112.7H975.02ZM981.4 49.8H981.87V112.7H981.4ZM987.78 49.8H987.94V112.7H987.78ZM994.16 49.8H994.46V112.7H994.16ZM1000.54 49.8H1000.84V112.7H1000.54ZM1006.92 49.8H1007.22V112.7H1006.92Z" fill="#000"/>
<path d="M120.98 47.199999999999996H122.63V49.8H120.98ZM127.36 47.199999999999996H129.01V49.8H127.36ZM133.74 47.199999999999996H135.39V49.8H133.74ZM140.12 47.199999999999996H141.77V49.8H140.12ZM146.5 47.199999999999996H148.15V49.8H146.5ZM152.88 47.199999999999996H154.53V49.8H152.88ZM159.26 47.199999999999996H160.65V49.8H159.26ZM165.64 47.199999999999996H166.73V49.8H165.64ZM172.02 47.199999999999996H172.8V49.8H172.02ZM178.4 47.199999999999996H178.87V49.8H178.4ZM184.78 47.199999999999996H184.94V49.8H184.78ZM191.16 47.199999999999996H191.46V49.8H191.16ZM197.54 47.199999999999996H197.84V49.8H197.54ZM203.92 47.199999999999996H204.22V49.8H203.92ZM522.48 47.199999999999996H524.13V49.8H522.48ZM528.86 47.199999999999996H530.51V49.8H528.86ZM535.24 47.199999999999996H536.89V49.8H535.24ZM541.62 47.199999999999996H543.27V49.8H541.62ZM548 47.199999999999996H549.65V49.8H548ZM554.38 47.199999999999996H556.03V49.8H554.38ZM560.76 47.199999999999996H562.15V49.8H560.76ZM567.14 47.199999999999996H568.23V49.8H567.14ZM573.52 47.199999999999996H574.3V49.8H573.52ZM579.9 47.199999999999996H580.37V49.8H579.9ZM586.28 47.199999999999996H586.44V49.8H586.28ZM592.66 47.199999999999996H592.96V49.8H592.66ZM599.04 47.199999999999996H599.34V49.8H599.04ZM605.42 47.199999999999996H605.72V49.8H605.42ZM923.98 47.199999999999996H925.63V49.8H923.98ZM930.36 47.199999999999996H932.01V49.8H930.36ZM936.74 47.199999999999996H938.39V49.8H936.74ZM943.12 47.199999999999996H944.77V49.8H943.12ZM949.5 47.199999999999996H951.15V49.8H949.5ZM955.88 47.199999999999996H957.53V49.8H955.88ZM962.26 47.199999999999996H963.65V49.8H962.26ZM968.64 47.199999999999996H969.73V49.8H968.64ZM975.02 47.199999999999996H975.8V49.8H975.02ZM981.4 47.199999999999996H981.87V49.8H981.4ZM987.78 47.199999999999996H987.94V49.8H987.78ZM994.16 47.199999999999996H994.46V49.8H994.16ZM1000.54 47.199999999999996H1000.84V49.8H1000.54ZM1006.92 47.199999999999996H1007.22V49.8H1006.92Z" fill="#004a4a"/>
<path d="M315.3 110.5V93.5" stroke="#00b0b0" stroke-width="1"/>
<path d="M717 110.5V93.5" stroke="#00b0b0" stroke-width="1"/>
<polyline points="49.99 259.99 50.99 266.23 56.26 264.41 57.26 271.33 62.52 269.52 63.52 277.31 68.79 275.02 69.79 283.21 75.06 281.45 76.06 290.03 81.32 288.05 82.32 296.56 87.59 295.53 88.59 303.75 93.85 303.13 94.85 311.08 100.12 311.08 101.12 318.97 106.38 318.97 107.38 326.98 112.65 326.98 114.65 337.92 118.72 337.92 120.92 345.89 124.98 345.89 127.18 353.72 131.25 353.72 133.45 361.34 137.51 361.34 139.71 368.66 143.78 368.66 145.98 375.62 150.04 375.62 152.24 382.14 156.31 382.14 158.51 388.18 162.57 388.18 164.78 393.67 168.84 393.67 171.04 398.55 175.11 398.55 177.31 402.78 181.37 402.78 183.57 406.32 187.64 406.32 189.84 409.13 193.9 409.13 196.1 411.2 200.17 411.2 202.37 412.49 206.43 412.49 208.63 412.99 212.7 412.99 213.9 412.36 219.17 413.26 220.17 411.24 225.43 412.69 226.43 409.64 231.7 411.14 232.7 406.83 237.96 409.12 238.96 403.69 244.23 406.09 245.23 400.28 250.49 402.04 251.49 395.53 256.76 397.75 257.76 390.63 263.02 392.51 264.02 384.99 269.29 386.78 270.29 378.68 275.56 380.63 276.56 372.07 281.82 373.88 282.82 365.27 288.09 366.58 289.09 358.24 294.35 358.88 295.35 350.92 300.62 350.92 301.62 343.03 306.88 343.03 307.88 335.02 313.15 335.02 315.15 324.08 319.22 324.08 321.42 316.11 325.48 316.11 327.68 308.28 331.75 308.28 333.95 300.66 338.01 300.66 340.21 293.34 344.28 293.34 346.48 286.38 350.54 286.38 352.74 279.86 356.81 279.86 359.01 273.82 363.07 273.82 365.27 268.33 369.34 268.33 371.54 263.45 375.61 263.45 377.81 259.22 381.87 259.22 384.07 255.68 388.14 255.68 390.34 252.87 394.4 252.87 396.6 250.8 400.67 250.8 402.87 249.51 406.93 249.51 409.13 249.01 413.2 249.01 414.4 249.59 419.67 248.77 420.67 250.77 425.93 249.3 426.93 252.55 432.2 250.73 433.2 254.96 438.46 253.02 439.46 258.28 444.73 255.94 445.73 261.79 450.99 259.92 451.99 266.21 457.26 264.42 458.26 271.32 463.52 269.52 464.52 277.01 469.79 275.22 470.79 283.42 476.06 281.31 477.06 289.98 482.32 288.09 483.32 296.53 488.59 295.54 489.59 303.7 494.85 303.16 495.85 311.08 501.12 311.08 502.12 318.97 507.38 318.97 508.38 326.98 513.65 326.98 515.65 337.92 519.72 337.92 521.92 345.89 525.98 345.89 528.18 353.72 532.25 353.72 534.45 361.34 538.51 361.34 540.71 368.66 544.78 368.66 546.98 375.62 551.04 375.62 553.24 382.14 557.31 382.14 559.51 388.18 563.58 388.18 565.77 393.67 569.84 393.67 572.04 398.55 576.11 398.55 578.31 402.78 582.37 402.78 584.57 406.32 588.64 406.32 590.84 409.13 594.9 409.13 597.1 411.2 601.17 411.2 603.37 412.49 607.43 412.49 609.63 412.99 613.7 412.99 614.9 412.33 620.17 413.28 621.17 411.44 626.43 412.56 627.43 409.64 632.7 411.14 633.7 407.01 638.96 409 639.96 404.01 645.23 405.87 646.23 399.99 651.49 402.23 652.49 395.75 657.76 397.61 658.76 390.39 664.02 392.67 665.02 384.95 670.29 386.81 671.29 378.8 676.56 380.55 677.56 372.14 682.82 373.83 683.82 365.41 689.09 366.49 690.09 358.32 695.35 358.83 696.35 350.92 701.62 350.92 702.62 343.03 707.88 343.03 708.88 335.02 714.15 335.02 716.15 324.08 720.22 324.08 722.42 316.11 726.48 316.11 728.68 308.28 732.75 308.28 734.95 300.66 739.01 300.66 741.21 293.34 745.28 293.34 747.48 286.38 751.54 286.38 753.74 279.86 757.81 279.86 760.01 273.82 764.08 273.82 766.27 268.33 770.34 268.33 772.54 263.45 776.61 263.45 778.81 259.22 782.87 259.22 785.07 255.68 789.14 255.68 791.34 252.87 795.4 252.87 797.6 250.8 801.67 250.8 803.87 249.51 807.93 249.51 810.13 249.01 814.2 249.01 815.4 249.72 820.67 248.68 821.67 250.69 826.93 249.35 827.93 252.53 833.2 250.74 834.2 255.21 839.46 252.85 840.46 258.15 845.73 256.02 846.73 261.75 851.99 259.94 852.99 266.18 858.26 264.44 859.26 271.29 864.52 269.55 865.52 277.09 870.79 275.16 871.79 283.2 877.06 281.45 878.06 289.92 883.32 288.12 884.32 296.6 889.59 295.5 890.59 303.68 895.85 303.17 896.85 311.08 902.12 311.08 903.12 318.97 908.38 318.97 909.38 326.98 914.65 326.98 916.65 337.92 920.72 337.92 922.92 345.89 926.98 345.89 929.18 353.72 933.25 353.72 935.45 361.34 939.51 361.34 941.71 368.66 945.78 368.66 947.98 375.62 952.04 375.62 954.24 382.14 958.31 382.14 960.51 388.18 964.58 388.18 966.77 393.67 970.84 393.67 973.04 398.55 977.11 398.55 979.31 402.78 983.37 402.78 985.57 406.32 989.64 406.32 991.84 409.13 995.9 409.13 998.1 411.2 1002.17 411.2 1004.37 412.49 1008.43 412.49 1010.63 412.99 1014.7 412.99 1015.9 412.41 1021.17 413.23 1022.17 411.36 1027.43 412.62 1028.43 409.54 1033.7 411.21 1034.7 406.8 1039.96 409.15 1040.96 403.81 1046.23 406.01 1047.23 400.14 1052.49 402.13 1053.49 395.78" stroke="#d6d600" stroke-width="1.15" fill="none" stroke-linejoin="miter"/>
<path d="M114.45 337.92H118.62M120.72 345.89H124.88M126.98 353.72H131.15M133.25 361.34H137.41M139.51 368.66H143.68M145.78 375.62H149.94M152.04 382.14H156.21M158.31 388.18H162.47M164.57 393.67H168.74M170.84 398.55H175.01M177.11 402.78H181.27M183.37 406.32H187.54M189.64 409.13H193.8M195.9 411.2H200.07M202.17 412.49H206.33M208.43 412.99H212.6M314.95 324.08H319.12M321.22 316.11H325.38M327.48 308.28H331.65M333.75 300.66H337.91M340.01 293.34H344.18M346.28 286.38H350.44M352.54 279.86H356.71M358.81 273.82H362.98M365.07 268.33H369.24M371.34 263.45H375.51M377.61 259.22H381.77M383.87 255.68H388.04M390.14 252.87H394.3M396.4 250.8H400.57M402.67 249.51H406.83M408.93 249.01H413.1M515.45 337.92H519.62M521.72 345.89H525.88M527.98 353.72H532.15M534.25 361.34H538.41M540.51 368.66H544.68M546.78 375.62H550.94M553.04 382.14H557.21M559.31 388.18H563.48M565.58 393.67H569.74M571.84 398.55H576.01M578.11 402.78H582.27M584.37 406.32H588.54M590.64 409.13H594.8M596.9 411.2H601.07M603.17 412.49H607.33M609.43 412.99H613.6M715.95 324.08H720.12M722.22 316.11H726.38M728.48 308.28H732.65M734.75 300.66H738.91M741.01 293.34H745.18M747.28 286.38H751.44M753.54 279.86H757.71M759.81 273.82H763.98M766.08 268.33H770.24M772.34 263.45H776.51M778.61 259.22H782.77M784.87 255.68H789.04M791.14 252.87H795.3M797.4 250.8H801.57M803.67 249.51H807.83M809.93 249.01H814.1M916.45 337.92H920.62M922.72 345.89H926.88M928.98 353.72H933.15M935.25 361.34H939.41M941.51 368.66H945.68M947.78 375.62H951.94M954.04 382.14H958.21M960.31 388.18H964.48M966.58 393.67H970.74M972.84 398.55H977.01M979.11 402.78H983.27M985.37 406.32H989.54M991.64 409.13H995.8M997.9 411.2H1002.07M1004.17 412.49H1008.33M1010.43 412.99H1014.6" stroke="#d6d600" stroke-width="3.7" fill="none"/>
<polyline points="50.04 374.93 52.24 381.58 56.31 381.58 58.51 387.73 62.58 387.73 64.78 393.31 68.84 393.31 71.04 398.28 75.11 398.28 77.31 402.59 81.37 402.59 83.57 406.2 87.64 406.2 89.84 409.06 93.9 409.06 96.1 411.16 100.17 411.16 102.37 412.48 106.43 412.48 108.63 412.99 112.7 412.99 113.9 412.4 119.17 413.23 120.17 411.23 125.43 412.67 126.43 409.43 131.7 411.21 132.7 406.75 137.96 409.03 138.96 403.85 144.23 405.74 145.23 399.7 150.49 402.07 151.49 395.2 156.76 397.48 157.76 390.15 163.03 392.18 164.03 384.5 169.29 386.29 170.29 378.02 175.56 380.06 176.56 371.54 181.82 373.02 182.82 364.48 188.09 365.68 189.09 357.28 194.35 357.86 195.35 349.79 200.62 349.79 201.62 341.75 206.88 341.75 207.88 333.6 213.15 333.6 215.15 322.46 219.22 322.46 221.42 314.34 225.48 314.34 227.68 306.36 231.75 306.36 233.95 298.61 238.01 298.61 240.21 291.15 244.28 291.15 246.48 284.07 250.54 284.07 252.74 277.42 256.81 277.42 259.01 271.27 263.07 271.27 265.27 265.69 269.34 265.69 271.54 260.72 275.61 260.72 277.81 256.41 281.87 256.41 284.07 252.8 288.14 252.8 290.34 249.94 294.4 249.94 296.6 247.84 300.67 247.84 302.87 246.52 306.93 246.52 309.13 246.01 313.2 246.01 314.4 246.7 319.67 245.7 320.67 247.81 325.93 246.3 326.93 249.42 332.2 247.89 333.2 252.03 338.46 250.11 339.46 255.05 344.73 253.33 345.73 259.14 350.99 257.04 351.99 263.76 357.26 261.55 358.26 268.79 363.52 266.86 364.52 274.74 369.79 272.55 370.79 280.93 376.06 278.98 377.06 287.68 382.32 285.84 383.32 294.42 388.59 293.38 389.59 301.75 394.85 301.11 395.85 309.21 401.12 309.21 402.12 317.25 407.38 317.25 408.38 325.4 413.65 325.4 415.65 336.54 419.72 336.54 421.92 344.66 425.98 344.66 428.18 352.64 432.25 352.64 434.45 360.39 438.51 360.39 440.71 367.85 444.78 367.85 446.98 374.93 451.04 374.93 453.24 381.58 457.31 381.58 459.51 387.73 463.57 387.73 465.77 393.31 469.84 393.31 472.04 398.28 476.11 398.28 478.31 402.59 482.37 402.59 484.57 406.2 488.64 406.2 490.84 409.06 494.9 409.06 497.1 411.16 501.17 411.16 503.37 412.48 507.43 412.48 509.63 412.99 513.7 412.99 514.9 412.3 520.17 413.3 521.17 411.18 526.43 412.71 527.43 409.38 532.7 411.25 533.7 407.04 538.96 408.84 539.96 403.59 545.23 405.91 546.23 399.8 551.49 402 552.49 395.51 557.76 397.27 558.76 390.19 564.02 392.15 565.02 384.27 570.29 386.44 571.29 378.23 576.56 379.91 577.56 371.57 582.82 373 583.82 364.56 589.09 365.63 590.09 357.26 595.35 357.88 596.35 349.79 601.62 349.79 602.62 341.75 607.88 341.75 608.88 333.6 614.15 333.6 616.15 322.46 620.22 322.46 622.42 314.34 626.48 314.34 628.68 306.36 632.75 306.36 634.95 298.61 639.01 298.61 641.21 291.15 645.28 291.15 647.48 284.07 651.54 284.07 653.74 277.42 657.81 277.42 660.01 271.27 664.08 271.27 666.27 265.69 670.34 265.69 672.54 260.72 676.61 260.72 678.81 256.41 682.87 256.41 685.07 252.8 689.14 252.8 691.34 249.94 695.4 249.94 697.6 247.84 701.67 247.84 703.87 246.52 707.93 246.52 710.13 246.01 714.2 246.01 715.4 246.72 720.67 245.69 721.67 247.82 726.93 246.29 727.93 249.61 733.2 247.77 734.2 252.32 739.46 249.92 740.46 255.31 745.73 253.16 746.73 259.31 751.99 256.93 752.99 263.69 758.26 261.59 759.26 268.73 764.52 266.9 765.52 274.66 770.79 272.6 771.79 280.98 777.06 278.95 778.06 287.54 783.32 285.93 784.32 294.45 789.59 293.37 790.59 301.7 795.85 301.15 796.85 309.21 802.12 309.21 803.12 317.25 808.38 317.25 809.38 325.4 814.65 325.4 816.65 336.54 820.72 336.54 822.92 344.66 826.98 344.66 829.18 352.64 833.25 352.64 835.45 360.39 839.51 360.39 841.71 367.85 845.78 367.85 847.98 374.93 852.04 374.93 854.24 381.58 858.31 381.58 860.51 387.73 864.58 387.73 866.77 393.31 870.84 393.31 873.04 398.28 877.11 398.28 879.31 402.59 883.37 402.59 885.57 406.2 889.64 406.2 891.84 409.06 895.9 409.06 898.1 411.16 902.17 411.16 904.37 412.48 908.43 412.48 910.63 412.99 914.7 412.99 915.9 412.34 921.17 413.27 922.17 411.28 927.43 412.64 928.43 409.46 933.7 411.19 934.7 406.82 939.96 408.99 940.96 403.89 946.23 405.71 947.23 399.88 952.49 401.95 953.49 395.44 958.76 397.32 959.76 390.02 965.02 392.27 966.02 384.26 971.29 386.45 972.29 377.89 977.56 380.14 978.56 371.4 983.82 373.12 984.82 364.58 990.09 365.61 991.09 357.25 996.35 357.88 997.35 349.79 1002.62 349.79 1003.62 341.75 1008.88 341.75 1009.88 333.6 1015.15 333.6 1017.15 322.46 1021.22 322.46 1023.42 314.34 1027.48 314.34 1029.68 306.36 1033.75 306.36 1035.95 298.61 1040.01 298.61 1042.21 291.15 1046.28 291.15 1048.48 284.07 1052.54 284.07" stroke="#ff1ea0" stroke-width="1.15" fill="none" stroke-linejoin="miter"/>
<path d="M49.3 374.93H49.94M52.04 381.58H56.21M58.31 387.73H62.48M64.58 393.31H68.74M70.84 398.28H75.01M77.11 402.59H81.27M83.37 406.2H87.54M89.64 409.06H93.8M95.9 411.16H100.07M102.17 412.48H106.33M108.43 412.99H112.6M214.95 322.46H219.12M221.22 314.34H225.38M227.48 306.36H231.65M233.75 298.61H237.91M240.01 291.15H244.18M246.28 284.07H250.44M252.54 277.42H256.71M258.81 271.27H262.98M265.07 265.69H269.24M271.34 260.72H275.51M277.61 256.41H281.77M283.87 252.8H288.04M290.14 249.94H294.3M296.4 247.84H300.57M302.67 246.52H306.83M308.93 246.01H313.1M415.45 336.54H419.62M421.72 344.66H425.88M427.98 352.64H432.15M434.25 360.39H438.41M440.51 367.85H444.68M446.78 374.93H450.94M453.04 381.58H457.21M459.31 387.73H463.48M465.57 393.31H469.74M471.84 398.28H476.01M478.11 402.59H482.27M484.37 406.2H488.54M490.64 409.06H494.8M496.9 411.16H501.07M503.17 412.48H507.33M509.43 412.99H513.6M615.95 322.46H620.12M622.22 314.34H626.38M628.48 306.36H632.65M634.75 298.61H638.91M641.01 291.15H645.18M647.28 284.07H651.44M653.54 277.42H657.71M659.81 271.27H663.98M666.08 265.69H670.24M672.34 260.72H676.51M678.61 256.41H682.77M684.87 252.8H689.04M691.14 249.94H695.3M697.4 247.84H701.57M703.67 246.52H707.83M709.93 246.01H714.1M816.45 336.54H820.62M822.72 344.66H826.88M828.98 352.64H833.15M835.25 360.39H839.41M841.51 367.85H845.68M847.78 374.93H851.94M854.04 381.58H858.21M860.31 387.73H864.48M866.58 393.31H870.74M872.84 398.28H877.01M879.11 402.59H883.27M885.37 406.2H889.54M891.64 409.06H895.8M897.9 411.16H902.07M904.17 412.48H908.33M910.43 412.99H914.6M1016.95 322.46H1021.12M1023.22 314.34H1027.38M1029.48 306.36H1033.65M1035.75 298.61H1039.91M1042.01 291.15H1046.18M1048.28 284.07H1052.44" stroke="#ff1ea0" stroke-width="3.7" fill="none"/>
</g>
<path d="M49.4 0V450.5" stroke="#dedede" stroke-width="1.5" stroke-dasharray="6.5 2.2 1.8 2.2" fill="none"/>
<path d="M216.9 0V450.5" stroke="#dedede" stroke-width="1.5" stroke-dasharray="6.2 2.8" fill="none"/>
<path d="M216.9 110.66L220.5 115.22H217.74V119.9H216.06V115.22H213.3Z" fill="#fff"/>
<path d="M216.9 198.66L220.5 203.22H217.74V207.9H216.06V203.22H213.3Z" fill="#fff"/>
<path d="M216.9 320.16L220.5 324.72H217.74V329.4H216.06V324.72H213.3Z" fill="#fff"/>
<path d="M216.9 386.76L220.5 391.32H217.74V396H216.06V391.32H213.3Z" fill="#fff"/>
<path d="M216.9 409.16L220.5 413.72H217.74V418.4H216.06V413.72H213.3Z" fill="#fff"/>
<path d="M49.3 104l4 1.2l-3.6 3.4z" fill="#fff"/>
<path d="M49.3 192.5l4 1.2l-3.6 3.4z" fill="#fff"/>
<path d="M49.3 255l4 1.2l-3.6 3.4z" fill="#fff"/>
<path d="M49.3 373l4 1.2l-3.6 3.4z" fill="#fff"/>
<path d="M49.3 386l4 1.2l-3.6 3.4z" fill="#fff"/>
<rect x="51.0" y="441.6" width="10.6" height="7.4" fill="#000"/>
<text x="51.6" y="448" font-size="7.4" font-weight="bold" fill="#f4f4f4" font-family='"Liberation Sans", sans-serif'>C</text>
<rect x="56.800000000000004" y="442.4" width="4.7" height="5.9" fill="#f4f4f4"/>
<text x="57.1" y="447.9" font-size="6.6" font-weight="bold" fill="#222" font-family='"Liberation Sans", sans-serif'>3</text>
<rect x="212.0" y="441.6" width="10.6" height="7.4" fill="#000"/>
<text x="212.6" y="448" font-size="7.4" font-weight="bold" fill="#f4f4f4" font-family='"Liberation Sans", sans-serif'>C</text>
<rect x="217.79999999999998" y="442.4" width="4.7" height="5.9" fill="#f4f4f4"/>
<text x="218.1" y="447.9" font-size="6.6" font-weight="bold" fill="#222" font-family='"Liberation Sans", sans-serif'>3</text>
<text x="518" y="35.1" font-size="7.95" fill="#d2d2d2" font-family='"Liberation Sans", sans-serif' textLength="26" lengthAdjust="spacingAndGlyphs">BOUT2</text>
<path d="M518 36.35h26" stroke="#c4c4c4" stroke-width="0.9" fill="none"/>
<path d="M531 36.6L551 45" stroke="#c0c0c0" stroke-width="0.9" fill="none"/>
<text x="519.6" y="188.4" font-size="7.95" fill="#d2d2d2" font-family='"Liberation Sans", sans-serif' textLength="26.2" lengthAdjust="spacingAndGlyphs">BOUT1</text>
<path d="M519.6 189.65h26.2" stroke="#c4c4c4" stroke-width="0.9" fill="none"/>
<path d="M533 189.9L553 198" stroke="#c0c0c0" stroke-width="0.9" fill="none"/>
<text x="492.4" y="363.4" font-size="7.95" fill="#d2d2d2" font-family='"Liberation Sans", sans-serif' textLength="52" lengthAdjust="spacingAndGlyphs">BOUT_Current</text>
<path d="M492.4 364.65h52" stroke="#c4c4c4" stroke-width="0.9" fill="none"/>
<path d="M513 364.9L574 379" stroke="#c0c0c0" stroke-width="0.9" fill="none"/>
<text x="514.4" y="369.6" font-size="7.95" fill="#d2d2d2" font-family='"Liberation Sans", sans-serif' textLength="52.6" lengthAdjust="spacingAndGlyphs">AOUT_Current</text>
<path d="M514.4 370.85h52.6" stroke="#c4c4c4" stroke-width="0.9" fill="none"/>
<path d="M536 371.1L560 381" stroke="#c0c0c0" stroke-width="0.9" fill="none"/>
<text x="516" y="381.7" font-size="7.95" fill="#d2d2d2" font-family='"Liberation Sans", sans-serif' textLength="29" lengthAdjust="spacingAndGlyphs">NHOME</text>
<path d="M516 382.95h29" stroke="#c4c4c4" stroke-width="0.9" fill="none"/>
<path d="M531 383.2L553 389.5" stroke="#c0c0c0" stroke-width="0.9" fill="none"/>
<text x="45.8" y="9.4" font-size="8.1" fill="#d8d8d8" text-anchor="end" font-family='"Liberation Sans", sans-serif'>73.9 V</text>
<text x="45.8" y="60.77" font-size="8.1" fill="#d8d8d8" text-anchor="end" font-family='"Liberation Sans", sans-serif'>63.9 V</text>
<text x="45.8" y="116.85" font-size="8.1" fill="#d8d8d8" text-anchor="end" font-family='"Liberation Sans", sans-serif'>53.9 V</text>
<text x="45.8" y="172.92" font-size="8.1" fill="#d8d8d8" text-anchor="end" font-family='"Liberation Sans", sans-serif'>43.9 V</text>
<text x="45.8" y="229" font-size="8.1" fill="#d8d8d8" text-anchor="end" font-family='"Liberation Sans", sans-serif'>33.9 V</text>
<text x="45.8" y="285.08" font-size="8.1" fill="#d8d8d8" text-anchor="end" font-family='"Liberation Sans", sans-serif'>23.9 V</text>
<text x="45.8" y="341.15" font-size="8.1" fill="#d8d8d8" text-anchor="end" font-family='"Liberation Sans", sans-serif'>13.9 V</text>
<text x="45.8" y="397.23" font-size="8.1" fill="#d8d8d8" text-anchor="end" font-family='"Liberation Sans", sans-serif'>3.9 V</text>
<text x="45.8" y="448" font-size="8.1" fill="#d8d8d8" text-anchor="end" font-family='"Liberation Sans", sans-serif'>-6.1 V</text>
<text x="49.3" y="459.5" font-size="8.1" fill="#d8d8d8" text-anchor="start" font-family='"Liberation Sans", sans-serif'>-10.04 ms</text>
<text x="149.64" y="459.5" font-size="8.1" fill="#d8d8d8" text-anchor="middle" font-family='"Liberation Sans", sans-serif'>-8.04 ms</text>
<text x="249.98" y="459.5" font-size="8.1" fill="#d8d8d8" text-anchor="middle" font-family='"Liberation Sans", sans-serif'>-6.04 ms</text>
<text x="350.32" y="459.5" font-size="8.1" fill="#d8d8d8" text-anchor="middle" font-family='"Liberation Sans", sans-serif'>-4.04 ms</text>
<text x="450.66" y="459.5" font-size="8.1" fill="#d8d8d8" text-anchor="middle" font-family='"Liberation Sans", sans-serif'>-2.04 ms</text>
<text x="551" y="459.5" font-size="8.1" fill="#d8d8d8" text-anchor="middle" font-family='"Liberation Sans", sans-serif'>-40 µs</text>
<text x="651.34" y="459.5" font-size="8.1" fill="#d8d8d8" text-anchor="middle" font-family='"Liberation Sans", sans-serif'>1.96 ms</text>
<text x="751.68" y="459.5" font-size="8.1" fill="#d8d8d8" text-anchor="middle" font-family='"Liberation Sans", sans-serif'>3.96 ms</text>
<text x="852.02" y="459.5" font-size="8.1" fill="#d8d8d8" text-anchor="middle" font-family='"Liberation Sans", sans-serif'>5.96 ms</text>
<text x="952.36" y="459.5" font-size="8.1" fill="#d8d8d8" text-anchor="middle" font-family='"Liberation Sans", sans-serif'>7.96 ms</text>
<text x="1052.6" y="459.5" font-size="8.1" fill="#d8d8d8" text-anchor="end" font-family='"Liberation Sans", sans-serif'>9.96 ms</text>
<path d="M552.9 450.4l-2.1 4.7h4.2z" fill="#00e4e4"/>
<path d="M1052.8 96.9l4.4 -2.3v4.6z" fill="#00e4e4"/>
<path d="M1062.4 0V566" stroke="#444" stroke-width="1.2"/>
<text x="40.2" y="107.8" font-size="6.4" fill="#00a8a8" font-family='"Liberation Sans", sans-serif'>C3</text>
<path d="M43 110.3H49" stroke="#00d8d8" stroke-width="1.4"/>
<text x="40.2" y="196.7" font-size="6.4" fill="#00a000" font-family='"Liberation Sans", sans-serif'>C4</text>
<path d="M43 198.9H49" stroke="#00b400" stroke-width="1.4"/>
<text x="40.2" y="314.8" font-size="6.4" fill="#d85aa0" font-family='"Liberation Sans", sans-serif'>C2</text>
<path d="M43 317.2H49" stroke="#f070b8" stroke-width="1.4"/>
<text x="40.2" y="326.4" font-size="6.4" fill="#c4c400" font-family='"Liberation Sans", sans-serif'>C1</text>
<path d="M43 329.0H49" stroke="#d8d800" stroke-width="1.4"/>
<rect x="38.3" y="408.3" width="11.3" height="6.9" fill="#ececec"/>
<text x="40.4" y="414.3" font-size="6.6" fill="#444" font-family='"Liberation Sans", sans-serif'>C5</text>
<path d="M43 416.8H49.5" stroke="#c0c0c0" stroke-width="1.2"/>
</svg>
<div class="m" style="left:3px;top:473px;font-weight:bold;font-size:8.7px;color:#f2f2f2">Measure</div>
<div style="position:absolute;left:2px;top:482.8px;width:1050px;height:10px;background:#1f1f1f;border-top:0.7px solid #3a3a3a"></div>
<div class="m" style="left:3px;top:484px">value</div>
<div class="m" style="left:3px;top:494.5px">status</div>
<div class="m r" style="left:43.0px;width:120px;top:473px">P1:max(C2)</div>
<div class="m r" style="left:123.7px;width:120px;top:473px">P2:max(C1)</div>
<div class="m r" style="left:204.4px;width:120px;top:473px">P3:slew(C3)</div>
<div class="m r dim" style="left:285.1px;width:120px;top:473px">P4:- - -</div>
<div class="m r dim" style="left:365.8px;width:120px;top:473px">P5:- - -</div>
<div class="m r dim" style="left:446.5px;width:120px;top:473px">P6:- - -</div>
<div class="m r dim" style="left:527.2px;width:120px;top:473px">P7:- - -</div>
<div class="m r dim" style="left:607.9px;width:120px;top:473px">P8:- - -</div>
<div class="m r dim" style="left:688.6px;width:120px;top:473px">P9:- - -</div>
<div class="m r dim" style="left:769.3px;width:120px;top:473px">P10:- - -</div>
<div class="m r dim" style="left:850.0px;width:120px;top:473px">P11:- - -</div>
<div class="m r dim" style="left:930.7px;width:120px;top:473px">P12:- - -</div>
<div class="m r" style="left:43.0px;width:120px;top:484px">1.308 A</div>
<svg style="position:absolute;left:155.0px;top:495.5px" width="8" height="6" viewBox="0 0 8 6"><path d="M0.8 3.2L2.8 5L7 0.8" stroke="#1fd01f" stroke-width="1.5" fill="none"/></svg>
<div class="m r" style="left:123.7px;width:120px;top:484px">1.464 A</div>
<svg style="position:absolute;left:235.7px;top:495.5px" width="8" height="6" viewBox="0 0 8 6"><path d="M0.8 3.2L2.8 5L7 0.8" stroke="#1fd01f" stroke-width="1.5" fill="none"/></svg>
<div class="m r" style="left:204.4px;width:120px;top:484px">142.884417 MV/s</div>
<svg style="position:absolute;left:316.4px;top:495.5px" width="8" height="6" viewBox="0 0 8 6"><path d="M0.8 3.2L2.8 5L7 0.8" stroke="#1fd01f" stroke-width="1.5" fill="none"/></svg>
<div class="ch" style="left:2.4px;background:#4f4f4f;"><div class="hd" style="background:#ffff00;color:#6a6a00"><span class="nm">C1</span><span class="bgs" style="background:#0a0a0a"><span class="bg" style="color:#a8a800">BwL</span><span class="bg" style="color:#a8a800">DC</span></span></div><div class="ln" style="top:12.5px">1.00 A/div</div><div class="ln" style="top:22.5px">-1.8300 A</div><div class="ln" style="top:37.5px"><i>↓</i>1.2179 A</div><div class="ln" style="top:47.3px"><i>↑</i>-1.4865 A</div></div><div class="ch" style="left:71.55000000000001px;background:#4f4f4f;"><div class="hd" style="background:#ff66b6;color:#8a2a5c"><span class="nm">C2</span><span class="bgs" style="background:#0a0a0a"><span class="bg" style="color:#b04880">BwL</span><span class="bg" style="color:#b04880">DC</span></span></div><div class="ln" style="top:12.5px">1.00 A/div</div><div class="ln" style="top:22.5px">-1.6250 A</div><div class="ln" style="top:37.5px"><i>↓</i>-1.0696 A</div><div class="ln" style="top:47.3px"><i>↑</i>-80.8 mA</div></div><div class="ch" style="left:140.70000000000002px;background:#4f4f4f;"><div class="hd" style="background:#00ffff;color:#007070"><span class="nm">C3</span><span class="bgs" style="background:#0a0a0a"><span class="bg" style="color:#00a4a4">DC1M</span></span></div><div class="ln" style="top:12.5px">20.0 V/div</div><div class="ln" style="top:22.5px">41.000 V ofst</div><div class="ln" style="top:37.5px"><i>↓</i>-84 mV</div><div class="ln" style="top:47.3px"><i>↑</i>-347 mV</div></div><div class="ch" style="left:209.85000000000002px;background:#4f4f4f;"><div class="hd" style="background:#00d000;color:#006000"><span class="nm">C4</span><span class="bgs" style="background:#002c00"><span class="bg" style="color:#00b400;background:#004a00">BwL</span><span class="bg" style="color:#00b400;background:#004a00">DC1M</span></span></div><div class="ln" style="top:12.5px">20.0 V/div</div><div class="ln" style="top:22.5px">9.600 V offset</div><div class="ln" style="top:37.5px"><i>↓</i>165 mV</div><div class="ln" style="top:47.3px"><i>↑</i>165 mV</div></div><div class="ch" style="left:279.0px;background:#2d5f8b;outline:1.2px solid #4a9be0;"><div class="hd" style="background:#ececec;color:#555"><span class="nm">C5</span><span class="bgs" style="background:#0a0a0a"><span class="bg" style="color:#f0f0f0;border-color:#000">DC1M</span></span></div><div class="ln" style="top:12.5px">10.0 V/div</div><div class="ln" style="top:22.5px">-33.900 V</div><div class="ln" style="top:37.5px"><i>↓</i>4.905 V</div><div class="ln" style="top:47.3px"><i>↑</i>4.886 V</div></div>
<div style="position:absolute;left:348.1px;top:505px;width:67.4px;height:57px;border:1px dotted #c4c4c4;box-sizing:border-box"></div>
<div class="m" style="left:377.3px;top:526.5px;font-size:14px;line-height:14px;color:#fff">+</div>

<div class="box" style="left:868.5px;top:505.5px;width:39px;height:34px"></div>
<div style="position:absolute;left:868.5px;top:505.5px;width:39px;height:10.2px;background:#00f000;color:#064406;text-align:center;font-size:9px;line-height:10.6px">HD</div>
<div class="t" style="left:868.5px;width:39px;text-align:center;top:522.5px">12 Bits</div>

<div class="box" style="left:910.2px;top:505.5px;width:77.4px;height:34px"></div>
<div class="wh" style="left:910.2px;top:505.5px;width:77.4px"><span style="position:absolute;left:1.2px">Timebase</span><span style="position:absolute;right:1px">40 µs</span></div>
<div class="t r" style="left:910.2px;width:76.4px;top:517.3px">2.00 ms/div</div>
<div class="t" style="left:911.5px;top:528.3px">25 MS</div>
<div class="t r" style="left:910.2px;width:76.4px;top:528.3px">1.25 GS/s</div>

<div class="box" style="left:989.9px;top:505.5px;width:66.4px;height:34px"></div>
<div class="wh" style="left:989.9px;top:505.5px;width:66.4px"><span style="position:absolute;left:1.5px">Trigger</span><span style="position:absolute;right:1px;top:0"><span class="bb">C3</span><span class="bb">DC</span></span></div>
<div class="t" style="left:991.5px;top:517.3px">Stop</div>
<div class="t r" style="left:989.9px;width:65.4px;top:517.3px">5.0 V</div>
<div class="t" style="left:991.5px;top:528.3px">Edge</div>
<div class="t r" style="left:989.9px;width:65.4px;top:528.3px">Positive</div>

<div class="t" style="left:873px;top:540.2px">X1=</div>
<div class="t r" style="left:880px;width:80.5px;top:540.2px">-10.0400000 ms</div>
<div class="t r" style="left:940px;width:51.5px;top:540.2px">ΔX=</div>
<div class="t r" style="left:980px;width:74.5px;top:540.2px">3.3421368 ms</div>
<div class="t" style="left:873px;top:551.2px">X2=</div>
<div class="t r" style="left:880px;width:80.5px;top:551.2px">-6.6978632 ms</div>
<div class="t r" style="left:940px;width:51.5px;top:551.2px">1/ΔX=</div>
<div class="t r" style="left:980px;width:74.5px;top:551.2px">299.20978 Hz</div>
<div style="position:absolute;left:0;top:564px;width:1063px;height:2px;background:#5a5a5a"></div>
</body></html>
